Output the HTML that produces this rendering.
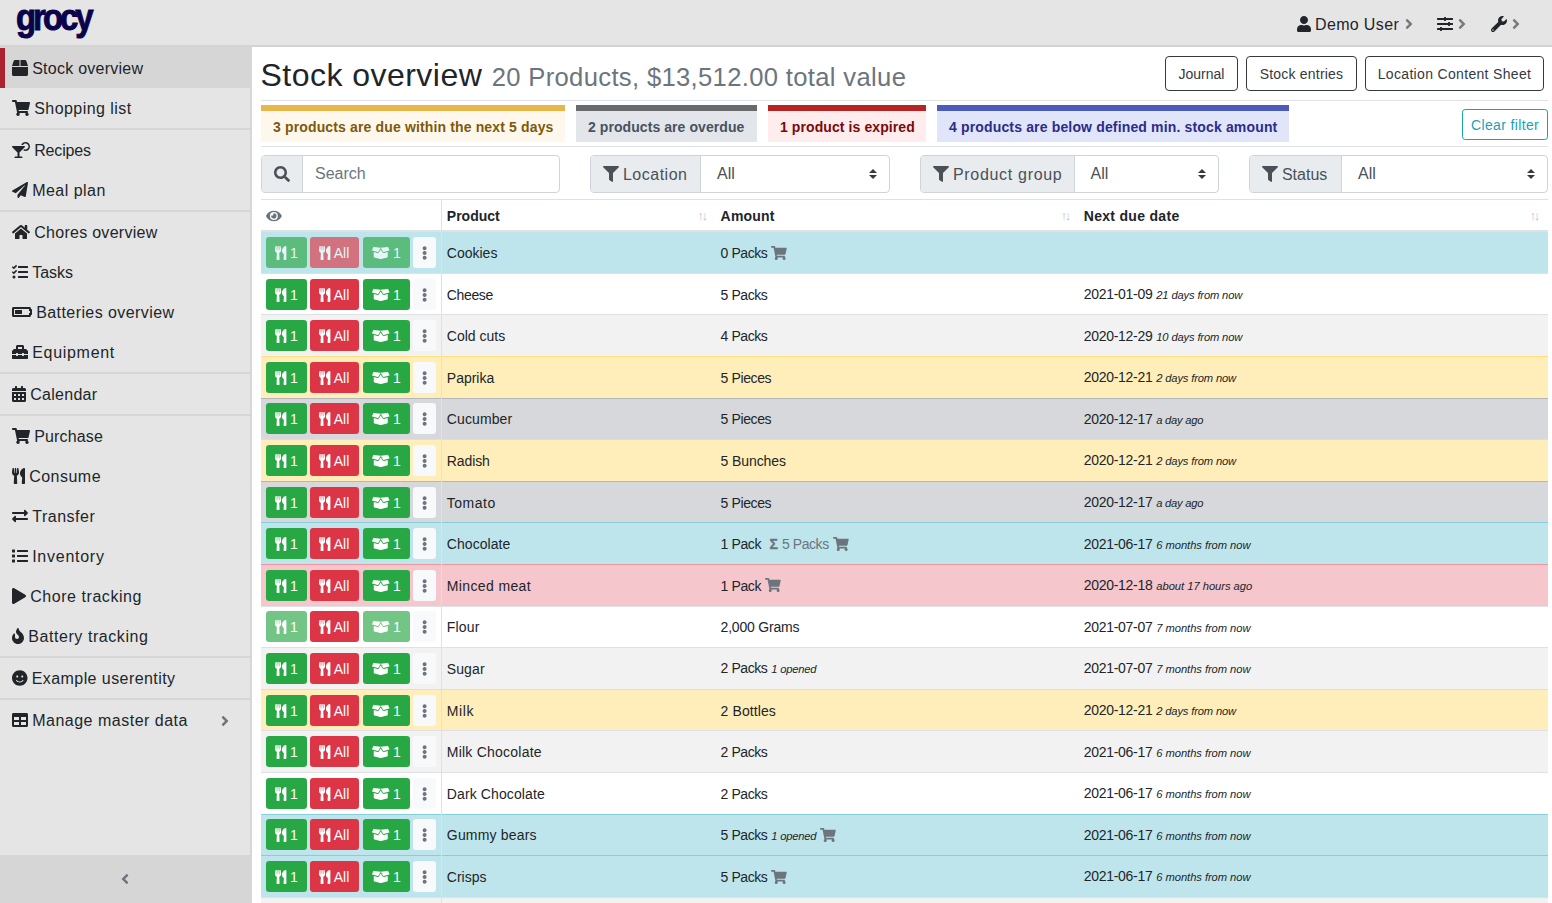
<!DOCTYPE html>
<html lang="en"><head><meta charset="utf-8"><title>Stock overview | grocy</title>
<style>
*{box-sizing:border-box}
html,body{margin:0;padding:0}
body{width:1552px;height:903px;overflow:hidden;background:#fff;color:#212529;
 font-family:"Liberation Sans",sans-serif;font-size:16px;line-height:1.5;position:relative}
svg.i{display:inline-block;fill:currentColor;vertical-align:-0.125em;overflow:visible}
#nav{position:absolute;left:0;top:0;width:1552px;height:47px;background:#e5e5e5;border-bottom:2px solid #d4d4d4}
#logo{position:absolute;left:15.5px;top:-7.5px;font-weight:bold;font-size:36.5px;line-height:50px;color:#0b024c;letter-spacing:-3.3px;transform-origin:0 0;transform:scaleX(.9);white-space:nowrap;-webkit-text-stroke:1px #0b024c}
#navr{position:absolute;top:13px;left:0;width:1552px;height:24px;font-size:16px;line-height:24px;white-space:nowrap}
#navr span{position:absolute;top:0}
#navr .ch{color:#7a7a7a}
#side{position:absolute;left:0;top:47px;width:252px;height:856px;background:#e5e5e5;border-right:2px solid #d6d6d6;border-top:1px solid #d6d6d6}
#side .it{height:40px;padding:9px 12px 7px;line-height:24px;font-size:16px;white-space:nowrap;position:relative}
#side .it.act{background:#d6d6d6;box-shadow:inset 5px 0 0 #ab2230}
#side .dv{height:2px;background:#d6d6d6}
#side .it svg.i{margin-right:4.2px}
#side .it .ar{position:absolute;left:221.3px;top:12.5px;color:#6c757d;margin:0}
#tog{position:absolute;left:0;top:807px;width:250px;height:49px;background:#d6d6d6;text-align:center;color:#6c757d;line-height:49px}
#main{position:absolute;left:261px;top:47px;width:1287px}
h2{position:absolute;left:-0.5px;top:8.7px;margin:0;font-size:32px;line-height:38.4px;font-weight:400;white-space:nowrap;letter-spacing:.47px}
h2 small{font-size:25.6px;color:#6c757d;font-weight:400;letter-spacing:.34px}
.tb{position:absolute;top:9px;height:35px;border:1px solid #343a40;border-radius:4px;color:#343a40;font-size:14px;line-height:21px;padding:7px 0 5px;text-align:center;white-space:nowrap}
.hr{position:absolute;left:0;width:1287px;height:1px;background:#dee2e6}
.msg{position:absolute;top:58px;height:37px;border-top:6px solid;padding:6px 12px 4px;font-size:14px;line-height:21px;font-weight:bold;white-space:nowrap}
.m1{border-color:#e8b749;background:#fef8ec;color:#7d5a0a}
.m2{border-color:#696a6c;background:#e2e5ea;color:#48525f}
.m3{border-color:#b82426;background:#ffecec;color:#7a0a0a}
.m4{border-color:#4b5db8;background:#e1e5f9;color:#2b2c8c}
#clr{position:absolute;left:1201px;top:62px;width:86px;height:31px;border:1px solid #17a2b8;border-radius:3.2px;color:#17a2b8;font-size:14px;line-height:21px;padding:5px 0 3px;text-align:center}
.ig{position:absolute;top:108px;height:38px;border:1px solid #ced4da;border-radius:4px;background:#fff;overflow:hidden;font-size:16px;line-height:24px;color:#495057;white-space:nowrap}
.ig .pre{position:absolute;left:0;top:0;bottom:0;background:#e9ecef;border-right:1px solid #ced4da;padding:7px 0 5px 11.5px;color:#495057}
.ig .val{position:absolute;top:6px}
.ig .car{position:absolute;top:13px;width:8px;height:10px}
.ig .ph{color:#6c757d}
table{position:absolute;left:0;top:151.6px;width:1287px;border-collapse:collapse;table-layout:fixed;font-size:14px;line-height:21px;color:#212529}
th,td{padding:4.8px;border-top:1px solid #dee2e6;vertical-align:middle;text-align:left;white-space:nowrap;overflow:hidden}
thead th{border-bottom:2px solid #dee2e6;font-weight:bold;position:relative;vertical-align:bottom}
.br{border-right:1px solid #dee2e6}
td.x{padding-top:5.8px;padding-bottom:3.8px}
thead th{padding-top:6.8px;padding-bottom:2.8px}
.sg{font-weight:bold;-webkit-text-stroke:.35px #6c757d}
tbody tr:nth-of-type(odd){background:rgba(0,0,0,.05)}
tr.info td{background:#bee5eb;border-color:#86cfda}
tr.warn td{background:#ffeeba;border-color:#ffdf7e}
tr.dang td{background:#f5c6cb;border-color:#ed969e}
tr.sec td{background:#d6d8db;border-color:#b3b7bb}
tr td.br{border-right-color:#dee2e6}
.b{display:inline-block;height:31px;border-radius:3.2px;color:#fff;font-size:14px;line-height:21px;padding:6px 0 4px;text-align:center;vertical-align:middle;white-space:nowrap}
.b svg.i{vertical-align:-2px}
.bg{background:#28a745;width:41px;margin-right:3px}
.bd{background:#dc3545;width:49px;margin-right:4px}
.bo{background:#28a745;width:47px;margin-right:3.3px}
.bk{background:#f8f9fa;width:22.7px;color:#6c757d}
.dis{opacity:.65}
.sort{position:absolute;bottom:4px;right:10.3px;opacity:.3;font-size:13px;line-height:21px;letter-spacing:-2.5px;font-weight:normal}
.mut{color:#6c757d}
.sm{font-size:11.2px;font-style:italic}
td .c{color:#6c757d}
</style></head>
<body>
<div id="nav"><div id="logo">grocy</div>
<div id="navr"><span style="left:1296.5px"><svg class="i " viewBox="0 0 448 512" width="14.0" height="16" style=""><path d="M224 256c70.7 0 128-57.3 128-128S294.7 0 224 0 96 57.3 96 128s57.3 128 128 128zm89.6 32h-16.7c-22.2 10.2-46.9 16-72.900 16s-50.600-5.800-72.900-16h-16.700C60.200 288 0 348.200 0 422.400V464c0 26.500 21.500 48 48 48h352c26.500 0 48-21.500 48-48v-41.600c0-74.200-60.200-134.400-134.400-134.400z"/></svg></span><span id="du" style="left:1315px;letter-spacing:.35px">Demo User</span><span class="ch" style="left:1405px"><svg class="i " viewBox="0 0 256 512" width="8.0" height="16" style=""><path d="M224.3 273l-136 136c-9.4 9.4-24.6 9.4-33.9 0l-22.6-22.6c-9.4-9.4-9.4-24.6 0-33.900l96.400-96.400-96.400-96.400c-9.400-9.400-9.400-24.600 0-33.900L54.300 103c9.400-9.400 24.600-9.400 33.900 0l136 136c9.500 9.400 9.500 24.600.1 34z"/></svg></span><span style="left:1437px"><svg class="i " viewBox="0 0 512 512" width="16.0" height="16" style=""><path d="M496 384H160v-16c0-8.800-7.200-16-16-16h-32c-8.800 0-16 7.200-16 16v16H16c-8.800 0-16 7.200-16 16v32c0 8.800 7.200 16 16 16h80v16c0 8.800 7.200 16 16 16h32c8.800 0 16-7.200 16-16v-16h336c8.800 0 16-7.200 16-16v-32c0-8.800-7.200-16-16-16zm0-160h-80v-16c0-8.800-7.200-16-16-16h-32c-8.800 0-16 7.200-16 16v16H16c-8.800 0-16 7.200-16 16v32c0 8.800 7.200 16 16 16h336v16c0 8.800 7.200 16 16 16h32c8.800 0 16-7.200 16-16v-16h80c8.800 0 16-7.200 16-16v-32c0-8.800-7.200-16-16-16zm0-160H288V48c0-8.800-7.200-16-16-16h-32c-8.800 0-16 7.200-16 16v16H16C7.200 64 0 71.200 0 80v32c0 8.800 7.200 16 16 16h208v16c0 8.800 7.200 16 16 16h32c8.800 0 16-7.200 16-16v-16h208c8.800 0 16-7.200 16-16V80c0-8.800-7.200-16-16-16z"/></svg></span><span class="ch" style="left:1458px"><svg class="i " viewBox="0 0 256 512" width="8.0" height="16" style=""><path d="M224.3 273l-136 136c-9.4 9.4-24.6 9.4-33.9 0l-22.6-22.6c-9.4-9.4-9.4-24.6 0-33.900l96.400-96.400-96.400-96.400c-9.400-9.400-9.400-24.600 0-33.900L54.300 103c9.400-9.400 24.600-9.400 33.900 0l136 136c9.500 9.400 9.500 24.600.1 34z"/></svg></span><span style="left:1490.5px"><svg class="i " viewBox="0 0 512 512" width="16.0" height="16" style=""><path d="M507.73 109.1c-2.24-9.03-13.54-12.09-20.12-5.51l-74.36 74.36-67.880-11.310-11.310-67.880 74.360-74.360c6.620-6.620 3.430-17.900-5.660-20.160-47.380-11.740-99.550.91-136.580 37.930-39.640 39.640-50.550 97.100-34.050 147.200L18.740 402.760c-24.990 24.990-24.990 65.510 0 90.500 24.990 24.990 65.510 24.990 90.500 0l213.210-213.210c50.120 16.710 107.470 5.680 147.370-34.220 37.070-37.070 49.700-89.320 37.910-136.730zM64 472c-13.250 0-24-10.750-24-24 0-13.260 10.750-24 24-24s24 10.740 24 24c0 13.250-10.750 24-24 24z"/></svg></span><span class="ch" style="left:1512px"><svg class="i " viewBox="0 0 256 512" width="8.0" height="16" style=""><path d="M224.3 273l-136 136c-9.4 9.4-24.6 9.4-33.9 0l-22.6-22.6c-9.4-9.4-9.4-24.6 0-33.900l96.400-96.400-96.400-96.400c-9.400-9.400-9.400-24.600 0-33.900L54.300 103c9.400-9.400 24.600-9.400 33.900 0l136 136c9.500 9.400 9.500 24.600.1 34z"/></svg></span></div></div>
<div id="side">
<div class="it act"><svg class="i " viewBox="0 0 512 512" width="16.0" height="16" style=""><path d="M509.5 184.6L458.9 32.8C452.4 13.2 434.1 0 413.4 0H272v192h238.700c-.4-2.5-.4-5-1.200-7.400zM240 0H98.600c-20.700 0-39 13.200-45.500 32.800L2.500 184.600c-.8 2.400-.8 4.900-1.200 7.400H240V0zM0 224v240c0 26.500 21.500 48 48 48h416c26.500 0 48-21.500 48-48V224H0z"/></svg><span class="t" style="letter-spacing:0.25px">Stock overview</span></div>
<div class="it"><svg class="i " viewBox="0 0 576 512" width="18.0" height="16" style=""><path d="M528.12 301.319l47.273-208C578.806 78.301 567.391 64 551.99 64H159.208l-9.166-44.81C147.758 8.021 137.93 0 126.529 0H24C10.745 0 0 10.745 0 24v16c0 13.255 10.745 24 24 24h69.883l70.248 343.435C147.325 417.1 136 435.222 136 456c0 30.928 25.072 56 56 56s56-25.072 56-56c0-15.674-6.447-29.835-16.824-40h209.647C430.447 426.165 424 440.326 424 456c0 30.928 25.072 56 56 56s56-25.072 56-56c0-22.172-12.888-41.332-31.579-50.405l5.517-24.276c3.413-15.018-8.002-29.319-23.403-29.319H218.117l-6.545-32h293.145c11.206 0 20.92-7.754 23.403-18.681z"/></svg><span class="t" style="letter-spacing:0.45px">Shopping list</span></div>
<div class="dv"></div>
<div class="it"><svg class="i " viewBox="0 0 576 512" width="18.0" height="16" style=""><path d="M296 464h-56V338.78l168.74-168.73c15.52-15.52 4.53-42.05-17.42-42.050H24.680c-21.950 0-32.940 26.530-17.420 42.050L176 338.780V464h-56c-22.090 0-40 17.910-40 40 0 4.420 3.580 8 8 8h240c4.420 0 8-3.580 8-8 0-22.090-17.910-40-40-40zM432 0c-62.610 0-115.350 40.200-135.180 96h52.540c16.650-28.550 47.270-48 82.640-48 52.930 0 96 43.060 96 96s-43.070 96-96 96c-14.040 0-27.290-3.200-39.320-8.640l-35.260 35.260C379.230 279.920 404.590 288 432 288c79.530 0 144-64.470 144-144S511.530 0 432 0z"/></svg><span class="t" style="letter-spacing:-0.17px">Recipes</span></div>
<div class="it"><svg class="i " viewBox="0 0 512 512" width="16.0" height="16" style=""><path d="M476 3.2L12.5 270.6c-18.1 10.4-15.8 35.6 2.2 43.2L121 358.4l287.300-253.200c5.500-4.900 13.300 2.600 8.600 8.300L176 407v80.500c0 23.600 28.500 32.900 42.500 15.800L282 426l124.600 52.200c14.200 6 30.400-2.900 33-18.200l72-432C515 7.800 493.300-6.800 476 3.200z"/></svg><span class="t" style="letter-spacing:0.47px">Meal plan</span></div>
<div class="dv"></div>
<div class="it"><svg class="i " viewBox="0 0 576 512" width="18.0" height="16" style=""><path d="M280.37 148.26L96 300.11V464a16 16 0 0 0 16 16l112.060-.29a16 16 0 0 0 15.920-16V368a16 16 0 0 1 16-16h64a16 16 0 0 1 16 16v95.640a16 16 0 0 0 16 16.050L464 480a16 16 0 0 0 16-16V300L295.670 148.260a12.190 12.190 0 0 0-15.300 0zM571.600 251.470L488 182.560V44.050a12 12 0 0 0-12-12h-56a12 12 0 0 0-12 12v72.610L318.470 43a48 48 0 0 0-61 0L4.340 251.470a12 12 0 0 0-1.600 16.900l25.500 31A12 12 0 0 0 45.150 301l235.220-193.740a12.190 12.190 0 0 1 15.300 0L530.900 301a12 12 0 0 0 16.900-1.600l25.500-31a12 12 0 0 0-1.700-16.930z"/></svg><span class="t" style="letter-spacing:0.28px">Chores overview</span></div>
<div class="it"><svg class="i " viewBox="0 0 512 512" width="16.0" height="16" style=""><path d="M139.61 35.5a12 12 0 0 0-17 0L58.93 98.81l-22.700-22.120a12 12 0 0 0-17 0L3.530 92.410a12 12 0 0 0 0 17l47.590 47.400a12.780 12.780 0 0 0 17.610 0l15.590-15.620L156.520 69a12.090 12.090 0 0 0 .09-17zm0 159.190a12 12 0 0 0-17 0l-63.680 63.720-22.700-22.100a12 12 0 0 0-17 0L3.530 252a12 12 0 0 0 0 17L51 316.500a12.770 12.770 0 0 0 17.600 0l15.700-15.690 72.200-72.220a12 12 0 0 0 .09-16.900zM64 368c-26.490 0-48.590 21.500-48.590 48S37.530 464 64 464a48 48 0 0 0 0-96zm432 16H208a16 16 0 0 0-16 16v32a16 16 0 0 0 16 16h288a16 16 0 0 0 16-16v-32a16 16 0 0 0-16-16zm0-320H208a16 16 0 0 0-16 16v32a16 16 0 0 0 16 16h288a16 16 0 0 0 16-16V80a16 16 0 0 0-16-16zm0 160H208a16 16 0 0 0-16 16v32a16 16 0 0 0 16 16h288a16 16 0 0 0 16-16v-32a16 16 0 0 0-16-16z"/></svg><span class="t" style="letter-spacing:-0.02px">Tasks</span></div>
<div class="it"><svg class="i " viewBox="0 0 640 512" width="20.0" height="16" style=""><path d="M544 160v64h32v64h-32v64H64V160h480m16-64H48c-26.510 0-48 21.490-48 48v224c0 26.510 21.490 48 48 48h512c26.510 0 48-21.490 48-48v-16h8c13.255 0 24-10.745 24-24V184c0-13.255-10.745-24-24-24h-8v-16c0-26.510-21.490-48-48-48zm-240 96H96v128h224V192z"/></svg><span class="t" style="letter-spacing:0.42px">Batteries overview</span></div>
<div class="it"><svg class="i " viewBox="0 0 512 512" width="16.0" height="16" style=""><path d="M502.63 214.63l-45.25-45.25c-6-6-14.14-9.37-22.630-9.370H384V80c0-26.510-21.490-48-48-48H176c-26.510 0-48 21.490-48 48v80H77.250c-8.490 0-16.620 3.370-22.630 9.370L9.370 214.630c-6 6-9.370 14.140-9.370 22.630V320h128v-16c0-8.840 7.160-16 16-16h32c8.840 0 16 7.160 16 16v16h128v-16c0-8.840 7.160-16 16-16h32c8.840 0 16 7.160 16 16v16h128v-82.750c0-8.480-3.370-16.620-9.370-22.620zM320 160H192V96h128v64zm64 208c0 8.840-7.160 16-16 16h-32c-8.840 0-16-7.160-16-16v-16H192v16c0 8.840-7.160 16-16 16h-32c-8.840 0-16-7.160-16-16v-16H0v96c0 17.670 14.330 32 32 32h448c17.670 0 32-14.330 32-32v-96H384v16z"/></svg><span class="t" style="letter-spacing:0.7px">Equipment</span></div>
<div class="dv"></div>
<div class="it"><svg class="i " viewBox="0 0 448 512" width="14.0" height="16" style=""><path d="M0 464c0 26.5 21.5 48 48 48h352c26.500 0 48-21.500 48-48V192H0v272zm320-196c0-6.600 5.400-12 12-12h40c6.600 0 12 5.400 12 12v40c0 6.600-5.400 12-12 12h-40c-6.600 0-12-5.400-12-12v-40zm0 128c0-6.600 5.400-12 12-12h40c6.600 0 12 5.400 12 12v40c0 6.600-5.400 12-12 12h-40c-6.600 0-12-5.400-12-12v-40zM192 268c0-6.600 5.400-12 12-12h40c6.600 0 12 5.400 12 12v40c0 6.600-5.400 12-12 12h-40c-6.600 0-12-5.400-12-12v-40zm0 128c0-6.600 5.400-12 12-12h40c6.600 0 12 5.400 12 12v40c0 6.600-5.400 12-12 12h-40c-6.600 0-12-5.400-12-12v-40zM64 268c0-6.600 5.400-12 12-12h40c6.600 0 12 5.400 12 12v40c0 6.600-5.400 12-12 12H76c-6.600 0-12-5.400-12-12v-40zm0 128c0-6.600 5.400-12 12-12h40c6.600 0 12 5.400 12 12v40c0 6.600-5.400 12-12 12H76c-6.600 0-12-5.400-12-12v-40zM400 64h-48V16c0-8.800-7.200-16-16-16h-32c-8.800 0-16 7.200-16 16v48H160V16c0-8.800-7.200-16-16-16h-32c-8.800 0-16 7.200-16 16v48H48C21.500 64 0 85.500 0 112v48h448v-48c0-26.500-21.500-48-48-48z"/></svg><span class="t" style="letter-spacing:0.28px">Calendar</span></div>
<div class="dv"></div>
<div class="it"><svg class="i " viewBox="0 0 576 512" width="18.0" height="16" style=""><path d="M528.12 301.319l47.273-208C578.806 78.301 567.391 64 551.99 64H159.208l-9.166-44.81C147.758 8.021 137.93 0 126.529 0H24C10.745 0 0 10.745 0 24v16c0 13.255 10.745 24 24 24h69.883l70.248 343.435C147.325 417.1 136 435.222 136 456c0 30.928 25.072 56 56 56s56-25.072 56-56c0-15.674-6.447-29.835-16.824-40h209.647C430.447 426.165 424 440.326 424 456c0 30.928 25.072 56 56 56s56-25.072 56-56c0-22.172-12.888-41.332-31.579-50.405l5.517-24.276c3.413-15.018-8.002-29.319-23.403-29.319H218.117l-6.545-32h293.145c11.206 0 20.92-7.754 23.403-18.681z"/></svg><span class="t" style="letter-spacing:0.15px">Purchase</span></div>
<div class="it"><svg class="i " viewBox="0 0 416 512" width="13.0" height="16" style=""><path d="M207.9 15.2c.8 4.7 16.1 94.5 16.1 128.8 0 52.300-27.800 89.600-68.900 104.600L168 486.700c.7 13.700-10.200 25.300-24 25.300H80c-13.700 0-24.700-11.500-24-25.300l12.900-238.100C27.700 233.600 0 196.200 0 144 0 109.600 15.300 19.900 16.100 15.200 19.300-5.100 61.400-5.400 64 16.300v141.200c1.300 3.400 15.100 3.200 16 0 1.400-25.300 7.900-139.200 8-141.800 3.300-20.800 44.700-20.800 47.900 0 .2 2.700 6.600 116.500 8 141.800.9 3.200 14.800 3.400 16 0V16.300c2.600-21.600 44.800-21.400 48-1.100zm119.200 285.700l-15 185.100c-1.200 14 9.900 26 23.900 26h56c13.300 0 24-10.700 24-24V24c0-13.200-10.700-24-24-24-82.500 0-221.400 178.500-64.900 300.900z"/></svg><span class="t" style="letter-spacing:0.48px">Consume</span></div>
<div class="it"><svg class="i " viewBox="0 0 512 512" width="16.0" height="16" style=""><path d="M0 168v-16c0-13.255 10.745-24 24-24h360V80c0-21.367 25.899-32.042 40.971-16.971l80 80c9.372 9.373 9.372 24.569 0 33.941l-80 80C409.956 271.982 384 261.456 384 240v-48H24c-13.255 0-24-10.745-24-24zm488 152H128v-48c0-21.314-25.862-32.080-40.971-16.971l-80 80c-9.372 9.373-9.372 24.569 0 33.941l80 80C102.057 463.997 128 453.437 128 432v-48h360c13.255 0 24-10.745 24-24v-16c0-13.255-10.745-24-24-24z"/></svg><span class="t" style="letter-spacing:0.52px">Transfer</span></div>
<div class="it"><svg class="i " viewBox="0 0 512 512" width="16.0" height="16" style=""><path d="M80 368H16a16 16 0 0 0-16 16v64a16 16 0 0 0 16 16h64a16 16 0 0 0 16-16v-64a16 16 0 0 0-16-16zm0-320H16A16 16 0 0 0 0 64v64a16 16 0 0 0 16 16h64a16 16 0 0 0 16-16V64a16 16 0 0 0-16-16zm0 160H16a16 16 0 0 0-16 16v64a16 16 0 0 0 16 16h64a16 16 0 0 0 16-16v-64a16 16 0 0 0-16-16zm416 176H176a16 16 0 0 0-16 16v32a16 16 0 0 0 16 16h320a16 16 0 0 0 16-16v-32a16 16 0 0 0-16-16zm0-320H176a16 16 0 0 0-16 16v32a16 16 0 0 0 16 16h320a16 16 0 0 0 16-16V80a16 16 0 0 0-16-16zm0 160H176a16 16 0 0 0-16 16v32a16 16 0 0 0 16 16h320a16 16 0 0 0 16-16v-32a16 16 0 0 0-16-16z"/></svg><span class="t" style="letter-spacing:0.74px">Inventory</span></div>
<div class="it"><svg class="i " viewBox="0 0 448 512" width="14.0" height="16" style=""><path d="M424.4 214.7L72.4 6.6C43.8-10.3 0 6.1 0 47.9V464c0 37.5 40.7 60.1 72.4 41.3l352-208c31.4-18.5 31.5-64.1 0-82.600z"/></svg><span class="t" style="letter-spacing:0.55px">Chore tracking</span></div>
<div class="it"><svg class="i " viewBox="0 0 384 512" width="12.0" height="16" style=""><path d="M216 23.86c0-23.8-30.65-32.77-44.15-13.04C48 191.85 224 200 224 288c0 35.630-29.110 64.460-64.850 63.990-35.170-.45-63.150-29.770-63.150-64.940v-85.510c0-21.700-26.470-32.230-41.430-16.500C27.800 213.160 0 261.330 0 320c0 105.870 86.130 192 192 192s192-86.130 192-192c0-170.290-168-193-168-296.140z"/></svg><span class="t" style="letter-spacing:0.57px">Battery tracking</span></div>
<div class="dv"></div>
<div class="it"><svg class="i " viewBox="0 0 496 512" width="15.5" height="16" style=""><path d="M248 8C111 8 0 119 0 256s111 248 248 248 248-111 248-248S385 8 248 8zm80 168c17.700 0 32 14.300 32 32s-14.300 32-32 32-32-14.300-32-32 14.300-32 32-32zm-160 0c17.700 0 32 14.300 32 32s-14.300 32-32 32-32-14.300-32-32 14.300-32 32-32zm194.800 170.200C334.300 380.400 292.500 400 248 400s-86.300-19.600-114.800-53.800c-13.600-16.300 11-36.700 24.600-20.500 22.400 26.900 55.200 42.200 90.200 42.200s67.800-15.400 90.200-42.200c13.400-16.200 38.100 4.200 24.600 20.500z"/></svg><span class="t" style="letter-spacing:0.43px">Example userentity</span></div>
<div class="dv"></div>
<div class="it"><svg class="i " viewBox="0 0 512 512" width="16.0" height="16" style=""><path d="M464 32H48C21.49 32 0 53.49 0 80v352c0 26.510 21.490 48 48 48h416c26.510 0 48-21.490 48-48V80c0-26.510-21.490-48-48-48zM224 416H64v-96h160v96zm0-160H64v-96h160v96zm224 160H288v-96h160v96zm0-160H288v-96h160v96z"/></svg><span class="t" style="letter-spacing:0.5px">Manage master data</span><svg class="i ar" viewBox="0 0 256 512" width="8.0" height="16" style=""><path d="M224.3 273l-136 136c-9.4 9.4-24.6 9.4-33.9 0l-22.6-22.6c-9.4-9.4-9.4-24.6 0-33.900l96.400-96.400-96.400-96.400c-9.400-9.400-9.400-24.600 0-33.900L54.300 103c9.400-9.400 24.600-9.400 33.900 0l136 136c9.500 9.400 9.500 24.600.1 34z"/></svg></div>
<div id="tog"><svg class="i " viewBox="0 0 256 512" width="8.0" height="16" style=""><path d="M31.7 239l136-136c9.4-9.4 24.6-9.4 33.900 0l22.600 22.600c9.400 9.400 9.400 24.600 0 33.900L127.900 256l96.400 96.400c9.400 9.400 9.400 24.600 0 33.900L201.700 409c-9.400 9.400-24.600 9.400-33.900 0l-136-136c-9.500-9.400-9.500-24.600-.1-34z"/></svg></div>
</div>
<div id="main">
<h2><span id="ttl">Stock overview</span> <small id="sub">20 Products, $13,512.00 total value</small></h2>
<div class="tb" style="left:904px;width:73px">Journal</div><div class="tb" style="left:985px;width:111px"><span style="letter-spacing:0.2px;">Stock entries</span></div><div class="tb" style="left:1104px;width:179px"><span style="letter-spacing:0.33px;">Location Content Sheet</span></div>
<div class="hr" style="top:53px"></div>
<div class="msg m1" style="left:0;width:304px"><span style="letter-spacing:0.144px;">3 products are due within the next 5 days</span></div><div class="msg m2" style="left:315px;width:181px"><span style="letter-spacing:0.07px;">2 products are overdue</span></div><div class="msg m3" style="left:507px;width:158px"><span style="letter-spacing:0.09px;">1 product is expired</span></div><div class="msg m4" style="left:676px;width:352px"><span style="letter-spacing:0.155px;">4 products are below defined min. stock amount</span></div><div id="clr"><span style="letter-spacing:0.36px;">Clear filter</span></div>
<div class="hr" style="top:99px"></div>
<div class="ig" style="left:0;width:299px"><div class="pre" style="width:40.5px"><svg class="i " viewBox="0 0 512 512" width="16.0" height="16" style=""><path d="M505 442.7L405.3 343c-4.5-4.5-10.6-7-17-7H372c27.600-35.300 44-79.700 44-128C416 93.100 322.900 0 208 0S0 93.100 0 208s93.100 208 208 208c48.300 0 92.700-16.400 128-44v16.300c0 6.400 2.500 12.500 7 17l99.700 99.700c9.400 9.400 24.600 9.400 33.900 0l28.300-28.300c9.400-9.400 9.400-24.600.1-34zM208 336c-70.700 0-128-57.200-128-128 0-70.700 57.200-128 128-128 70.700 0 128 57.200 128 128 0 70.700-57.200 128-128 128z"/></svg></div><span class="val ph" style="left:53px">Search</span></div>
<div class="ig" style="left:329px;width:300px"><div class="pre" style="width:110px"><svg class="i " viewBox="0 0 512 512" width="16.0" height="16" style=""><path d="M487.976 0H24.028C2.71 0-8.047 25.866 7.058 40.971L192 225.941V432c0 7.831 3.821 15.170 10.237 19.662l80 55.980C298.020 518.690 320 507.493 320 487.980V225.941l184.947-184.970C520.021 25.896 509.338 0 487.976 0z"/></svg>&nbsp;<span style="letter-spacing:0.5px;">Location</span></div><span class="val" style="left:126px">All</span><svg class="car" viewBox="0 0 4 5" style="left:278px"><path fill="#343a40" d="M2 0L0 2h4zm0 5L0 3h4z"/></svg></div>
<div class="ig" style="left:659px;width:299px"><div class="pre" style="width:154px"><svg class="i " viewBox="0 0 512 512" width="16.0" height="16" style=""><path d="M487.976 0H24.028C2.71 0-8.047 25.866 7.058 40.971L192 225.941V432c0 7.831 3.821 15.170 10.237 19.662l80 55.980C298.020 518.690 320 507.493 320 487.980V225.941l184.947-184.970C520.021 25.896 509.338 0 487.976 0z"/></svg>&nbsp;<span style="letter-spacing:0.69px;">Product group</span></div><span class="val" style="left:169.5px">All</span><svg class="car" viewBox="0 0 4 5" style="left:277px"><path fill="#343a40" d="M2 0L0 2h4zm0 5L0 3h4z"/></svg></div>
<div class="ig" style="left:988px;width:299px"><div class="pre" style="width:92px"><svg class="i " viewBox="0 0 512 512" width="16.0" height="16" style=""><path d="M487.976 0H24.028C2.71 0-8.047 25.866 7.058 40.971L192 225.941V432c0 7.831 3.821 15.170 10.237 19.662l80 55.980C298.020 518.690 320 507.493 320 487.980V225.941l184.947-184.970C520.021 25.896 509.338 0 487.976 0z"/></svg>&nbsp;Status</div><span class="val" style="left:108px">All</span><svg class="car" viewBox="0 0 4 5" style="left:277px"><path fill="#343a40" d="M2 0L0 2h4zm0 5L0 3h4z"/></svg></div>
<table><colgroup><col style="width:180.5px"><col style="width:274.3px"><col style="width:363.2px"><col></colgroup>
<thead><tr><th class="br"><svg class="i " viewBox="0 0 576 512" width="15.75" height="14" style="margin-left:0.5px;color:#6c757d"><path d="M572.52 241.4C518.29 135.59 410.93 64 288 64S57.68 135.64 3.480 241.410a32.350 32.350 0 0 0 0 29.190C57.710 376.410 165.070 448 288 448s230.320-71.640 284.520-177.410a32.350 32.350 0 0 0 0-29.190zM288 400a144 144 0 1 1 144-144 143.930 143.930 0 0 1-144 144zm0-240a95.310 95.310 0 0 0-25.310 3.790 47.850 47.850 0 0 1-66.900 66.900A95.780 95.780 0 1 0 288 160z"/></svg></th><th>Product<span class="sort">↑↓</span></th><th><span style="letter-spacing:0.2px;">Amount</span><span class="sort">↑↓</span></th><th><span style="letter-spacing:0.3px;">Next due date</span><span class="sort">↑↓</span></th></tr></thead>
<tbody>
<tr class="info"><td class="br"><span class="b bg dis"><svg class="i " viewBox="0 0 416 512" width="11.375" height="14" style=""><path d="M207.9 15.2c.8 4.7 16.1 94.5 16.1 128.8 0 52.300-27.800 89.600-68.900 104.600L168 486.700c.7 13.700-10.200 25.300-24 25.300H80c-13.700 0-24.700-11.500-24-25.300l12.900-238.100C27.700 233.600 0 196.200 0 144 0 109.600 15.300 19.900 16.100 15.200 19.300-5.100 61.400-5.400 64 16.300v141.200c1.300 3.400 15.100 3.200 16 0 1.400-25.300 7.900-139.200 8-141.800 3.300-20.800 44.700-20.800 47.900 0 .2 2.700 6.600 116.500 8 141.800.9 3.200 14.800 3.400 16 0V16.300c2.600-21.600 44.800-21.400 48-1.100zm119.200 285.700l-15 185.100c-1.200 14 9.900 26 23.900 26h56c13.300 0 24-10.700 24-24V24c0-13.200-10.700-24-24-24-82.500 0-221.400 178.500-64.900 300.900z"/></svg> 1</span><span class="b bd dis"><svg class="i " viewBox="0 0 416 512" width="11.375" height="14" style=""><path d="M207.9 15.2c.8 4.7 16.1 94.5 16.1 128.8 0 52.300-27.800 89.600-68.900 104.600L168 486.700c.7 13.700-10.200 25.300-24 25.300H80c-13.700 0-24.700-11.500-24-25.300l12.900-238.100C27.700 233.600 0 196.200 0 144 0 109.600 15.300 19.900 16.100 15.200 19.300-5.100 61.400-5.400 64 16.300v141.200c1.300 3.400 15.100 3.200 16 0 1.400-25.300 7.900-139.200 8-141.800 3.300-20.800 44.700-20.800 47.900 0 .2 2.700 6.600 116.500 8 141.800.9 3.200 14.800 3.400 16 0V16.300c2.600-21.600 44.800-21.400 48-1.100zm119.200 285.700l-15 185.100c-1.200 14 9.900 26 23.900 26h56c13.300 0 24-10.700 24-24V24c0-13.200-10.700-24-24-24-82.500 0-221.400 178.500-64.900 300.900z"/></svg> All</span><span class="b bo dis"><svg class="i " viewBox="0 0 640 512" width="17.5" height="14" style=""><path d="M425.7 256c-16.9 0-32.8-9-41.4-23.4L320 126l-64.200 106.600c-8.700 14.500-24.600 23.500-41.500 23.500-4.500 0-9-.6-13.300-1.900L64 215v178c0 14.700 10 27.500 24.200 31l216.200 54.100c10.200 2.500 20.900 2.500 31 0L551.800 424c14.200-3.600 24.200-16.400 24.200-31V215l-137 39.100c-4.300 1.300-8.800 1.900-13.300 1.900zm212.600-112.200L586.800 41c-3.100-6.200-9.800-9.800-16.700-8.900L320 64l91.700 152.100c3.800 6.300 11.400 9.300 18.500 7.300l197.900-56.500c9.900-2.900 14.700-13.900 10.200-23.100zM53.200 41L1.700 143.800c-4.600 9.200.3 20.200 10.100 23l197.900 56.500c7.100 2 14.700-1 18.500-7.300L320 64 69.800 32.100c-6.900-.8-13.500 2.700-16.600 8.900z"/></svg> 1</span><span class="b bk"><svg class="i " viewBox="0 0 192 512" width="5.25" height="14" style=""><path d="M96 184c39.8 0 72 32.2 72 72s-32.2 72-72 72-72-32.2-72-72 32.2-72 72-72zM24 80c0 39.800 32.200 72 72 72s72-32.200 72-72S135.800 8 96 8 24 40.200 24 80zm0 352c0 39.800 32.200 72 72 72s72-32.200 72-72-32.200-72-72-72-72 32.200-72 72z"/></svg></span></td><td class="x">Cookies</td><td class="x"><span style="letter-spacing:-0.43px;">0 Packs</span> <svg class="i c" viewBox="0 0 576 512" width="15.75" height="14" style=""><path d="M528.12 301.319l47.273-208C578.806 78.301 567.391 64 551.99 64H159.208l-9.166-44.81C147.758 8.021 137.93 0 126.529 0H24C10.745 0 0 10.745 0 24v16c0 13.255 10.745 24 24 24h69.883l70.248 343.435C147.325 417.1 136 435.222 136 456c0 30.928 25.072 56 56 56s56-25.072 56-56c0-15.674-6.447-29.835-16.824-40h209.647C430.447 426.165 424 440.326 424 456c0 30.928 25.072 56 56 56s56-25.072 56-56c0-22.172-12.888-41.332-31.579-50.405l5.517-24.276c3.413-15.018-8.002-29.319-23.403-29.319H218.117l-6.545-32h293.145c11.206 0 20.92-7.754 23.403-18.681z"/></svg></td><td class="x"></td></tr>
<tr class=""><td class="br"><span class="b bg"><svg class="i " viewBox="0 0 416 512" width="11.375" height="14" style=""><path d="M207.9 15.2c.8 4.7 16.1 94.5 16.1 128.8 0 52.300-27.800 89.600-68.900 104.600L168 486.700c.7 13.700-10.200 25.300-24 25.300H80c-13.700 0-24.700-11.500-24-25.300l12.900-238.100C27.700 233.600 0 196.200 0 144 0 109.600 15.300 19.900 16.100 15.200 19.300-5.100 61.400-5.400 64 16.300v141.200c1.300 3.400 15.100 3.200 16 0 1.400-25.300 7.900-139.200 8-141.800 3.300-20.800 44.700-20.800 47.900 0 .2 2.700 6.600 116.500 8 141.800.9 3.200 14.800 3.400 16 0V16.300c2.600-21.600 44.800-21.400 48-1.100zm119.200 285.700l-15 185.100c-1.200 14 9.900 26 23.900 26h56c13.300 0 24-10.700 24-24V24c0-13.200-10.700-24-24-24-82.500 0-221.400 178.500-64.900 300.900z"/></svg> 1</span><span class="b bd"><svg class="i " viewBox="0 0 416 512" width="11.375" height="14" style=""><path d="M207.9 15.2c.8 4.7 16.1 94.5 16.1 128.8 0 52.300-27.800 89.600-68.900 104.600L168 486.700c.7 13.700-10.200 25.300-24 25.300H80c-13.700 0-24.700-11.500-24-25.300l12.900-238.100C27.700 233.600 0 196.200 0 144 0 109.600 15.300 19.900 16.100 15.200 19.300-5.100 61.400-5.400 64 16.300v141.200c1.300 3.400 15.100 3.200 16 0 1.400-25.300 7.900-139.200 8-141.800 3.300-20.800 44.700-20.800 47.900 0 .2 2.700 6.600 116.500 8 141.800.9 3.200 14.800 3.400 16 0V16.300c2.600-21.600 44.800-21.400 48-1.100zm119.200 285.700l-15 185.100c-1.200 14 9.900 26 23.900 26h56c13.300 0 24-10.700 24-24V24c0-13.200-10.700-24-24-24-82.500 0-221.400 178.500-64.900 300.900z"/></svg> All</span><span class="b bo"><svg class="i " viewBox="0 0 640 512" width="17.5" height="14" style=""><path d="M425.7 256c-16.9 0-32.8-9-41.4-23.4L320 126l-64.200 106.600c-8.700 14.500-24.600 23.500-41.500 23.500-4.500 0-9-.6-13.300-1.900L64 215v178c0 14.700 10 27.500 24.200 31l216.200 54.100c10.200 2.500 20.900 2.500 31 0L551.800 424c14.200-3.600 24.200-16.400 24.200-31V215l-137 39.100c-4.300 1.300-8.800 1.900-13.300 1.900zm212.600-112.200L586.800 41c-3.100-6.200-9.800-9.800-16.700-8.900L320 64l91.700 152.100c3.800 6.300 11.400 9.300 18.500 7.300l197.900-56.500c9.900-2.900 14.700-13.900 10.200-23.100zM53.200 41L1.700 143.800c-4.600 9.200.3 20.200 10.100 23l197.900 56.500c7.100 2 14.700-1 18.500-7.300L320 64 69.800 32.100c-6.900-.8-13.500 2.700-16.600 8.900z"/></svg> 1</span><span class="b bk"><svg class="i " viewBox="0 0 192 512" width="5.25" height="14" style=""><path d="M96 184c39.8 0 72 32.2 72 72s-32.2 72-72 72-72-32.2-72-72 32.2-72 72-72zM24 80c0 39.800 32.200 72 72 72s72-32.200 72-72S135.800 8 96 8 24 40.200 24 80zm0 352c0 39.800 32.200 72 72 72s72-32.200 72-72-32.200-72-72-72-72 32.200-72 72z"/></svg></span></td><td class="x"><span style="letter-spacing:-0.35px;">Cheese</span></td><td class="x"><span style="letter-spacing:-0.43px;">5 Packs</span></td><td class="x"><span style="letter-spacing:-0.3px;">2021-01-09</span> <span class="sm" style="letter-spacing:-0.15px">21 days from now</span></td></tr>
<tr class=""><td class="br"><span class="b bg"><svg class="i " viewBox="0 0 416 512" width="11.375" height="14" style=""><path d="M207.9 15.2c.8 4.7 16.1 94.5 16.1 128.8 0 52.300-27.800 89.600-68.900 104.600L168 486.700c.7 13.700-10.200 25.300-24 25.300H80c-13.700 0-24.700-11.500-24-25.300l12.900-238.100C27.700 233.600 0 196.200 0 144 0 109.600 15.300 19.900 16.100 15.200 19.300-5.100 61.400-5.400 64 16.300v141.200c1.300 3.400 15.100 3.200 16 0 1.400-25.300 7.900-139.200 8-141.800 3.300-20.800 44.700-20.800 47.900 0 .2 2.700 6.600 116.500 8 141.800.9 3.200 14.800 3.400 16 0V16.300c2.600-21.600 44.800-21.400 48-1.100zm119.200 285.700l-15 185.100c-1.200 14 9.900 26 23.900 26h56c13.300 0 24-10.700 24-24V24c0-13.200-10.700-24-24-24-82.500 0-221.400 178.500-64.900 300.900z"/></svg> 1</span><span class="b bd"><svg class="i " viewBox="0 0 416 512" width="11.375" height="14" style=""><path d="M207.9 15.2c.8 4.7 16.1 94.5 16.1 128.8 0 52.300-27.800 89.600-68.900 104.600L168 486.700c.7 13.700-10.200 25.300-24 25.300H80c-13.700 0-24.700-11.500-24-25.300l12.900-238.100C27.700 233.600 0 196.200 0 144 0 109.600 15.300 19.900 16.100 15.200 19.300-5.100 61.400-5.400 64 16.300v141.200c1.300 3.400 15.100 3.200 16 0 1.400-25.300 7.900-139.200 8-141.800 3.300-20.800 44.700-20.800 47.900 0 .2 2.700 6.600 116.500 8 141.800.9 3.200 14.800 3.400 16 0V16.300c2.600-21.600 44.800-21.400 48-1.100zm119.200 285.700l-15 185.100c-1.200 14 9.900 26 23.900 26h56c13.300 0 24-10.700 24-24V24c0-13.200-10.700-24-24-24-82.500 0-221.400 178.500-64.900 300.900z"/></svg> All</span><span class="b bo"><svg class="i " viewBox="0 0 640 512" width="17.5" height="14" style=""><path d="M425.7 256c-16.9 0-32.8-9-41.4-23.4L320 126l-64.200 106.600c-8.700 14.500-24.600 23.500-41.500 23.500-4.500 0-9-.6-13.300-1.900L64 215v178c0 14.700 10 27.500 24.200 31l216.200 54.100c10.200 2.500 20.900 2.500 31 0L551.800 424c14.200-3.600 24.200-16.400 24.200-31V215l-137 39.100c-4.300 1.300-8.800 1.900-13.300 1.900zm212.600-112.200L586.800 41c-3.100-6.200-9.800-9.800-16.700-8.900L320 64l91.700 152.100c3.800 6.300 11.400 9.300 18.500 7.300l197.900-56.500c9.900-2.900 14.700-13.900 10.200-23.100zM53.200 41L1.700 143.800c-4.600 9.200.3 20.200 10.100 23l197.900 56.500c7.100 2 14.700-1 18.500-7.300L320 64 69.800 32.100c-6.900-.8-13.500 2.700-16.600 8.900z"/></svg> 1</span><span class="b bk"><svg class="i " viewBox="0 0 192 512" width="5.25" height="14" style=""><path d="M96 184c39.8 0 72 32.2 72 72s-32.2 72-72 72-72-32.2-72-72 32.2-72 72-72zM24 80c0 39.800 32.200 72 72 72s72-32.200 72-72S135.800 8 96 8 24 40.200 24 80zm0 352c0 39.800 32.200 72 72 72s72-32.200 72-72-32.200-72-72-72-72 32.200-72 72z"/></svg></span></td><td class="x">Cold cuts</td><td class="x"><span style="letter-spacing:-0.43px;">4 Packs</span></td><td class="x"><span style="letter-spacing:-0.3px;">2020-12-29</span> <span class="sm" style="letter-spacing:-0.15px">10 days from now</span></td></tr>
<tr class="warn"><td class="br"><span class="b bg"><svg class="i " viewBox="0 0 416 512" width="11.375" height="14" style=""><path d="M207.9 15.2c.8 4.7 16.1 94.5 16.1 128.8 0 52.300-27.800 89.600-68.900 104.600L168 486.700c.7 13.700-10.200 25.300-24 25.300H80c-13.700 0-24.700-11.500-24-25.300l12.900-238.100C27.700 233.600 0 196.200 0 144 0 109.600 15.300 19.900 16.100 15.200 19.300-5.100 61.400-5.400 64 16.300v141.200c1.300 3.400 15.100 3.200 16 0 1.400-25.300 7.900-139.200 8-141.800 3.300-20.800 44.700-20.800 47.900 0 .2 2.700 6.600 116.500 8 141.800.9 3.200 14.800 3.400 16 0V16.300c2.600-21.600 44.800-21.400 48-1.100zm119.200 285.700l-15 185.100c-1.200 14 9.900 26 23.900 26h56c13.300 0 24-10.700 24-24V24c0-13.200-10.700-24-24-24-82.500 0-221.400 178.500-64.900 300.900z"/></svg> 1</span><span class="b bd"><svg class="i " viewBox="0 0 416 512" width="11.375" height="14" style=""><path d="M207.9 15.2c.8 4.7 16.1 94.5 16.1 128.8 0 52.300-27.800 89.600-68.900 104.600L168 486.700c.7 13.700-10.200 25.300-24 25.300H80c-13.700 0-24.700-11.500-24-25.300l12.900-238.100C27.700 233.600 0 196.200 0 144 0 109.600 15.300 19.900 16.100 15.200 19.300-5.100 61.400-5.400 64 16.300v141.200c1.300 3.400 15.100 3.200 16 0 1.400-25.300 7.900-139.200 8-141.800 3.300-20.800 44.700-20.800 47.900 0 .2 2.700 6.600 116.500 8 141.800.9 3.200 14.800 3.400 16 0V16.300c2.600-21.600 44.800-21.400 48-1.100zm119.200 285.700l-15 185.100c-1.200 14 9.900 26 23.900 26h56c13.300 0 24-10.700 24-24V24c0-13.200-10.700-24-24-24-82.500 0-221.400 178.500-64.900 300.900z"/></svg> All</span><span class="b bo"><svg class="i " viewBox="0 0 640 512" width="17.5" height="14" style=""><path d="M425.7 256c-16.9 0-32.8-9-41.4-23.4L320 126l-64.200 106.600c-8.700 14.500-24.600 23.500-41.500 23.500-4.500 0-9-.6-13.300-1.900L64 215v178c0 14.700 10 27.500 24.200 31l216.200 54.100c10.200 2.500 20.900 2.500 31 0L551.800 424c14.200-3.600 24.200-16.400 24.200-31V215l-137 39.100c-4.300 1.300-8.800 1.900-13.300 1.900zm212.600-112.200L586.800 41c-3.100-6.200-9.800-9.800-16.700-8.900L320 64l91.700 152.100c3.800 6.300 11.400 9.300 18.500 7.300l197.900-56.500c9.900-2.900 14.700-13.900 10.200-23.100zM53.200 41L1.700 143.800c-4.600 9.200.3 20.200 10.100 23l197.900 56.500c7.100 2 14.700-1 18.500-7.300L320 64 69.800 32.100c-6.900-.8-13.500 2.700-16.600 8.900z"/></svg> 1</span><span class="b bk"><svg class="i " viewBox="0 0 192 512" width="5.25" height="14" style=""><path d="M96 184c39.8 0 72 32.2 72 72s-32.2 72-72 72-72-32.2-72-72 32.2-72 72-72zM24 80c0 39.800 32.200 72 72 72s72-32.200 72-72S135.800 8 96 8 24 40.200 24 80zm0 352c0 39.800 32.200 72 72 72s72-32.200 72-72-32.200-72-72-72-72 32.200-72 72z"/></svg></span></td><td class="x">Paprika</td><td class="x"><span style="letter-spacing:-0.39px;">5 Pieces</span></td><td class="x"><span style="letter-spacing:-0.3px;">2020-12-21</span> <span class="sm" style="letter-spacing:-0.16px">2 days from now</span></td></tr>
<tr class="sec"><td class="br"><span class="b bg"><svg class="i " viewBox="0 0 416 512" width="11.375" height="14" style=""><path d="M207.9 15.2c.8 4.7 16.1 94.5 16.1 128.8 0 52.300-27.800 89.600-68.900 104.600L168 486.700c.7 13.700-10.200 25.300-24 25.300H80c-13.700 0-24.700-11.500-24-25.300l12.900-238.100C27.700 233.600 0 196.200 0 144 0 109.600 15.300 19.900 16.100 15.200 19.300-5.100 61.400-5.400 64 16.300v141.200c1.300 3.400 15.100 3.200 16 0 1.400-25.300 7.900-139.200 8-141.800 3.300-20.800 44.700-20.800 47.900 0 .2 2.700 6.600 116.500 8 141.800.9 3.200 14.800 3.400 16 0V16.300c2.600-21.600 44.800-21.400 48-1.100zm119.200 285.700l-15 185.100c-1.200 14 9.900 26 23.900 26h56c13.300 0 24-10.700 24-24V24c0-13.200-10.700-24-24-24-82.500 0-221.400 178.500-64.900 300.900z"/></svg> 1</span><span class="b bd"><svg class="i " viewBox="0 0 416 512" width="11.375" height="14" style=""><path d="M207.9 15.2c.8 4.7 16.1 94.5 16.1 128.8 0 52.300-27.800 89.600-68.900 104.600L168 486.700c.7 13.700-10.200 25.300-24 25.300H80c-13.700 0-24.700-11.500-24-25.300l12.900-238.100C27.700 233.600 0 196.200 0 144 0 109.600 15.300 19.900 16.100 15.200 19.300-5.100 61.400-5.400 64 16.300v141.200c1.300 3.400 15.100 3.200 16 0 1.400-25.300 7.900-139.200 8-141.800 3.300-20.800 44.700-20.800 47.900 0 .2 2.700 6.600 116.500 8 141.800.9 3.200 14.800 3.400 16 0V16.300c2.600-21.600 44.800-21.400 48-1.100zm119.200 285.700l-15 185.100c-1.200 14 9.900 26 23.900 26h56c13.300 0 24-10.700 24-24V24c0-13.200-10.700-24-24-24-82.500 0-221.400 178.500-64.900 300.900z"/></svg> All</span><span class="b bo"><svg class="i " viewBox="0 0 640 512" width="17.5" height="14" style=""><path d="M425.7 256c-16.9 0-32.8-9-41.4-23.4L320 126l-64.200 106.600c-8.700 14.500-24.600 23.500-41.500 23.500-4.500 0-9-.6-13.300-1.900L64 215v178c0 14.700 10 27.500 24.200 31l216.200 54.100c10.200 2.500 20.900 2.500 31 0L551.800 424c14.200-3.600 24.200-16.400 24.200-31V215l-137 39.100c-4.300 1.300-8.800 1.900-13.300 1.900zm212.600-112.200L586.800 41c-3.100-6.200-9.800-9.800-16.700-8.900L320 64l91.700 152.100c3.800 6.300 11.400 9.300 18.500 7.300l197.900-56.500c9.900-2.900 14.700-13.900 10.200-23.100zM53.200 41L1.700 143.800c-4.600 9.200.3 20.200 10.100 23l197.900 56.500c7.100 2 14.700-1 18.500-7.300L320 64 69.800 32.100c-6.900-.8-13.500 2.700-16.600 8.900z"/></svg> 1</span><span class="b bk"><svg class="i " viewBox="0 0 192 512" width="5.25" height="14" style=""><path d="M96 184c39.8 0 72 32.2 72 72s-32.2 72-72 72-72-32.2-72-72 32.2-72 72-72zM24 80c0 39.800 32.200 72 72 72s72-32.200 72-72S135.800 8 96 8 24 40.200 24 80zm0 352c0 39.800 32.200 72 72 72s72-32.200 72-72-32.200-72-72-72-72 32.200-72 72z"/></svg></span></td><td class="x"><span style="letter-spacing:0.1px;">Cucumber</span></td><td class="x"><span style="letter-spacing:-0.39px;">5 Pieces</span></td><td class="x"><span style="letter-spacing:-0.3px;">2020-12-17</span> <span class="sm" style="letter-spacing:-0.26px">a day ago</span></td></tr>
<tr class="warn"><td class="br"><span class="b bg"><svg class="i " viewBox="0 0 416 512" width="11.375" height="14" style=""><path d="M207.9 15.2c.8 4.7 16.1 94.5 16.1 128.8 0 52.300-27.800 89.600-68.900 104.600L168 486.700c.7 13.700-10.200 25.300-24 25.300H80c-13.700 0-24.700-11.500-24-25.300l12.900-238.100C27.700 233.600 0 196.200 0 144 0 109.600 15.300 19.900 16.100 15.200 19.300-5.100 61.400-5.400 64 16.300v141.200c1.300 3.400 15.100 3.200 16 0 1.400-25.300 7.900-139.200 8-141.800 3.300-20.800 44.700-20.800 47.900 0 .2 2.700 6.600 116.500 8 141.800.9 3.200 14.800 3.400 16 0V16.300c2.600-21.600 44.800-21.400 48-1.100zm119.200 285.700l-15 185.100c-1.200 14 9.900 26 23.900 26h56c13.300 0 24-10.700 24-24V24c0-13.200-10.700-24-24-24-82.500 0-221.400 178.500-64.900 300.900z"/></svg> 1</span><span class="b bd"><svg class="i " viewBox="0 0 416 512" width="11.375" height="14" style=""><path d="M207.9 15.2c.8 4.7 16.1 94.5 16.1 128.8 0 52.300-27.800 89.600-68.900 104.600L168 486.700c.7 13.700-10.200 25.300-24 25.300H80c-13.700 0-24.700-11.500-24-25.300l12.900-238.100C27.700 233.600 0 196.200 0 144 0 109.600 15.300 19.900 16.100 15.200 19.300-5.100 61.400-5.400 64 16.300v141.200c1.300 3.400 15.100 3.200 16 0 1.400-25.300 7.900-139.200 8-141.800 3.300-20.800 44.700-20.800 47.900 0 .2 2.700 6.600 116.500 8 141.800.9 3.200 14.800 3.400 16 0V16.300c2.600-21.600 44.800-21.400 48-1.100zm119.200 285.700l-15 185.100c-1.200 14 9.900 26 23.900 26h56c13.300 0 24-10.700 24-24V24c0-13.200-10.700-24-24-24-82.500 0-221.400 178.500-64.900 300.900z"/></svg> All</span><span class="b bo"><svg class="i " viewBox="0 0 640 512" width="17.5" height="14" style=""><path d="M425.7 256c-16.9 0-32.8-9-41.4-23.4L320 126l-64.200 106.600c-8.700 14.500-24.600 23.500-41.500 23.500-4.500 0-9-.6-13.300-1.900L64 215v178c0 14.700 10 27.500 24.200 31l216.200 54.100c10.200 2.500 20.900 2.500 31 0L551.800 424c14.200-3.600 24.200-16.400 24.200-31V215l-137 39.100c-4.300 1.300-8.800 1.900-13.300 1.900zm212.600-112.200L586.800 41c-3.100-6.200-9.800-9.800-16.700-8.900L320 64l91.700 152.100c3.800 6.300 11.400 9.300 18.500 7.300l197.900-56.500c9.900-2.900 14.700-13.900 10.200-23.100zM53.200 41L1.700 143.800c-4.600 9.200.3 20.200 10.100 23l197.900 56.500c7.100 2 14.700-1 18.500-7.300L320 64 69.800 32.100c-6.900-.8-13.500 2.700-16.600 8.900z"/></svg> 1</span><span class="b bk"><svg class="i " viewBox="0 0 192 512" width="5.25" height="14" style=""><path d="M96 184c39.8 0 72 32.2 72 72s-32.2 72-72 72-72-32.2-72-72 32.2-72 72-72zM24 80c0 39.800 32.200 72 72 72s72-32.200 72-72S135.800 8 96 8 24 40.200 24 80zm0 352c0 39.800 32.200 72 72 72s72-32.200 72-72-32.200-72-72-72-72 32.200-72 72z"/></svg></span></td><td class="x"><span style="letter-spacing:-0.1px;">Radish</span></td><td class="x"><span style="letter-spacing:-0.1px;">5 Bunches</span></td><td class="x"><span style="letter-spacing:-0.3px;">2020-12-21</span> <span class="sm" style="letter-spacing:-0.16px">2 days from now</span></td></tr>
<tr class="sec"><td class="br"><span class="b bg"><svg class="i " viewBox="0 0 416 512" width="11.375" height="14" style=""><path d="M207.9 15.2c.8 4.7 16.1 94.5 16.1 128.8 0 52.300-27.800 89.600-68.900 104.600L168 486.700c.7 13.700-10.200 25.300-24 25.300H80c-13.700 0-24.700-11.500-24-25.300l12.900-238.100C27.700 233.600 0 196.200 0 144 0 109.600 15.300 19.900 16.100 15.200 19.300-5.100 61.400-5.400 64 16.300v141.200c1.300 3.400 15.100 3.200 16 0 1.400-25.300 7.900-139.200 8-141.800 3.300-20.800 44.700-20.800 47.900 0 .2 2.700 6.600 116.500 8 141.800.9 3.200 14.800 3.400 16 0V16.300c2.600-21.600 44.800-21.400 48-1.100zm119.200 285.700l-15 185.100c-1.200 14 9.900 26 23.900 26h56c13.300 0 24-10.700 24-24V24c0-13.200-10.700-24-24-24-82.500 0-221.400 178.500-64.900 300.900z"/></svg> 1</span><span class="b bd"><svg class="i " viewBox="0 0 416 512" width="11.375" height="14" style=""><path d="M207.9 15.2c.8 4.7 16.1 94.5 16.1 128.8 0 52.300-27.800 89.600-68.900 104.600L168 486.700c.7 13.700-10.200 25.300-24 25.300H80c-13.700 0-24.700-11.500-24-25.300l12.900-238.100C27.700 233.600 0 196.200 0 144 0 109.600 15.300 19.900 16.100 15.200 19.300-5.100 61.400-5.400 64 16.300v141.200c1.300 3.400 15.100 3.200 16 0 1.400-25.300 7.900-139.200 8-141.800 3.300-20.800 44.700-20.800 47.900 0 .2 2.700 6.600 116.500 8 141.800.9 3.200 14.800 3.400 16 0V16.300c2.600-21.600 44.800-21.400 48-1.100zm119.200 285.700l-15 185.100c-1.200 14 9.900 26 23.900 26h56c13.300 0 24-10.700 24-24V24c0-13.200-10.700-24-24-24-82.500 0-221.400 178.500-64.900 300.900z"/></svg> All</span><span class="b bo"><svg class="i " viewBox="0 0 640 512" width="17.5" height="14" style=""><path d="M425.7 256c-16.9 0-32.8-9-41.4-23.4L320 126l-64.200 106.600c-8.700 14.500-24.600 23.500-41.500 23.500-4.500 0-9-.6-13.300-1.900L64 215v178c0 14.700 10 27.500 24.200 31l216.200 54.100c10.200 2.500 20.900 2.500 31 0L551.800 424c14.200-3.600 24.200-16.400 24.200-31V215l-137 39.100c-4.300 1.300-8.800 1.900-13.300 1.900zm212.600-112.200L586.800 41c-3.100-6.200-9.800-9.800-16.700-8.900L320 64l91.700 152.100c3.800 6.300 11.400 9.300 18.500 7.300l197.900-56.500c9.900-2.900 14.700-13.900 10.200-23.100zM53.200 41L1.700 143.800c-4.600 9.200.3 20.200 10.100 23l197.900 56.500c7.100 2 14.700-1 18.500-7.300L320 64 69.800 32.100c-6.900-.8-13.500 2.700-16.600 8.900z"/></svg> 1</span><span class="b bk"><svg class="i " viewBox="0 0 192 512" width="5.25" height="14" style=""><path d="M96 184c39.8 0 72 32.2 72 72s-32.2 72-72 72-72-32.2-72-72 32.2-72 72-72zM24 80c0 39.800 32.200 72 72 72s72-32.200 72-72S135.800 8 96 8 24 40.200 24 80zm0 352c0 39.800 32.200 72 72 72s72-32.200 72-72-32.200-72-72-72-72 32.200-72 72z"/></svg></span></td><td class="x"><span style="letter-spacing:0.5px;">Tomato</span></td><td class="x"><span style="letter-spacing:-0.39px;">5 Pieces</span></td><td class="x"><span style="letter-spacing:-0.3px;">2020-12-17</span> <span class="sm" style="letter-spacing:-0.26px">a day ago</span></td></tr>
<tr class="info"><td class="br"><span class="b bg"><svg class="i " viewBox="0 0 416 512" width="11.375" height="14" style=""><path d="M207.9 15.2c.8 4.7 16.1 94.5 16.1 128.8 0 52.300-27.800 89.600-68.900 104.600L168 486.700c.7 13.700-10.200 25.300-24 25.300H80c-13.700 0-24.700-11.500-24-25.300l12.900-238.100C27.700 233.600 0 196.200 0 144 0 109.600 15.300 19.900 16.100 15.200 19.300-5.100 61.400-5.400 64 16.300v141.200c1.300 3.400 15.100 3.200 16 0 1.400-25.300 7.900-139.200 8-141.800 3.300-20.800 44.700-20.800 47.900 0 .2 2.700 6.600 116.500 8 141.800.9 3.200 14.800 3.400 16 0V16.300c2.600-21.600 44.800-21.400 48-1.100zm119.200 285.700l-15 185.100c-1.200 14 9.900 26 23.900 26h56c13.300 0 24-10.700 24-24V24c0-13.200-10.700-24-24-24-82.500 0-221.400 178.500-64.900 300.900z"/></svg> 1</span><span class="b bd"><svg class="i " viewBox="0 0 416 512" width="11.375" height="14" style=""><path d="M207.9 15.2c.8 4.7 16.1 94.5 16.1 128.8 0 52.300-27.800 89.600-68.900 104.600L168 486.700c.7 13.700-10.200 25.300-24 25.300H80c-13.700 0-24.700-11.500-24-25.300l12.900-238.100C27.700 233.600 0 196.200 0 144 0 109.600 15.300 19.900 16.100 15.200 19.300-5.100 61.400-5.400 64 16.300v141.200c1.300 3.400 15.100 3.200 16 0 1.400-25.300 7.900-139.200 8-141.800 3.300-20.800 44.700-20.800 47.900 0 .2 2.700 6.600 116.500 8 141.800.9 3.200 14.800 3.400 16 0V16.300c2.600-21.600 44.800-21.400 48-1.100zm119.200 285.700l-15 185.100c-1.200 14 9.900 26 23.900 26h56c13.300 0 24-10.700 24-24V24c0-13.200-10.700-24-24-24-82.500 0-221.400 178.500-64.900 300.900z"/></svg> All</span><span class="b bo"><svg class="i " viewBox="0 0 640 512" width="17.5" height="14" style=""><path d="M425.7 256c-16.9 0-32.8-9-41.4-23.4L320 126l-64.200 106.600c-8.700 14.500-24.600 23.500-41.500 23.500-4.500 0-9-.6-13.300-1.900L64 215v178c0 14.700 10 27.500 24.200 31l216.200 54.100c10.200 2.500 20.900 2.500 31 0L551.800 424c14.200-3.600 24.200-16.400 24.200-31V215l-137 39.100c-4.300 1.300-8.800 1.900-13.300 1.900zm212.600-112.200L586.800 41c-3.100-6.200-9.800-9.800-16.700-8.900L320 64l91.700 152.100c3.800 6.300 11.400 9.300 18.500 7.300l197.900-56.500c9.900-2.900 14.700-13.900 10.200-23.100zM53.200 41L1.700 143.800c-4.600 9.200.3 20.200 10.100 23l197.900 56.500c7.100 2 14.700-1 18.500-7.300L320 64 69.800 32.100c-6.900-.8-13.500 2.700-16.600 8.900z"/></svg> 1</span><span class="b bk"><svg class="i " viewBox="0 0 192 512" width="5.25" height="14" style=""><path d="M96 184c39.8 0 72 32.2 72 72s-32.2 72-72 72-72-32.2-72-72 32.2-72 72-72zM24 80c0 39.800 32.200 72 72 72s72-32.200 72-72S135.800 8 96 8 24 40.200 24 80zm0 352c0 39.800 32.200 72 72 72s72-32.200 72-72-32.200-72-72-72-72 32.200-72 72z"/></svg></span></td><td class="x"><span style="letter-spacing:0.06px;">Chocolate</span></td><td class="x"><span style="letter-spacing:-0.38px;">1 Pack</span> <span class="mut" style="margin-left:4.6px"><b class="sg">Σ</b> <span style="letter-spacing:-0.43px;">5 Packs</span></span> <svg class="i c" viewBox="0 0 576 512" width="15.75" height="14" style=""><path d="M528.12 301.319l47.273-208C578.806 78.301 567.391 64 551.99 64H159.208l-9.166-44.81C147.758 8.021 137.93 0 126.529 0H24C10.745 0 0 10.745 0 24v16c0 13.255 10.745 24 24 24h69.883l70.248 343.435C147.325 417.1 136 435.222 136 456c0 30.928 25.072 56 56 56s56-25.072 56-56c0-15.674-6.447-29.835-16.824-40h209.647C430.447 426.165 424 440.326 424 456c0 30.928 25.072 56 56 56s56-25.072 56-56c0-22.172-12.888-41.332-31.579-50.405l5.517-24.276c3.413-15.018-8.002-29.319-23.403-29.319H218.117l-6.545-32h293.145c11.206 0 20.92-7.754 23.403-18.681z"/></svg></td><td class="x"><span style="letter-spacing:-0.3px;">2021-06-17</span> <span class="sm" style="letter-spacing:-0.06px">6 months from now</span></td></tr>
<tr class="dang"><td class="br"><span class="b bg"><svg class="i " viewBox="0 0 416 512" width="11.375" height="14" style=""><path d="M207.9 15.2c.8 4.7 16.1 94.5 16.1 128.8 0 52.300-27.800 89.600-68.900 104.600L168 486.700c.7 13.700-10.200 25.300-24 25.300H80c-13.700 0-24.700-11.500-24-25.300l12.900-238.100C27.700 233.600 0 196.200 0 144 0 109.600 15.300 19.900 16.100 15.200 19.300-5.100 61.400-5.400 64 16.300v141.200c1.300 3.400 15.100 3.200 16 0 1.400-25.300 7.900-139.200 8-141.800 3.300-20.800 44.700-20.800 47.900 0 .2 2.700 6.600 116.500 8 141.800.9 3.200 14.800 3.400 16 0V16.300c2.600-21.600 44.800-21.400 48-1.100zm119.200 285.700l-15 185.100c-1.200 14 9.900 26 23.900 26h56c13.300 0 24-10.700 24-24V24c0-13.200-10.700-24-24-24-82.500 0-221.400 178.500-64.900 300.900z"/></svg> 1</span><span class="b bd"><svg class="i " viewBox="0 0 416 512" width="11.375" height="14" style=""><path d="M207.9 15.2c.8 4.7 16.1 94.5 16.1 128.8 0 52.300-27.800 89.600-68.900 104.600L168 486.700c.7 13.700-10.200 25.300-24 25.300H80c-13.700 0-24.700-11.500-24-25.300l12.900-238.100C27.700 233.600 0 196.200 0 144 0 109.600 15.300 19.900 16.100 15.200 19.300-5.100 61.400-5.400 64 16.300v141.200c1.300 3.400 15.100 3.200 16 0 1.400-25.300 7.900-139.200 8-141.800 3.300-20.800 44.700-20.800 47.900 0 .2 2.700 6.600 116.500 8 141.800.9 3.200 14.800 3.400 16 0V16.300c2.600-21.600 44.800-21.400 48-1.100zm119.200 285.700l-15 185.100c-1.200 14 9.900 26 23.900 26h56c13.300 0 24-10.700 24-24V24c0-13.200-10.700-24-24-24-82.500 0-221.400 178.500-64.900 300.900z"/></svg> All</span><span class="b bo"><svg class="i " viewBox="0 0 640 512" width="17.5" height="14" style=""><path d="M425.7 256c-16.9 0-32.8-9-41.4-23.4L320 126l-64.200 106.600c-8.700 14.500-24.600 23.500-41.500 23.500-4.500 0-9-.6-13.300-1.900L64 215v178c0 14.700 10 27.500 24.200 31l216.200 54.100c10.200 2.500 20.900 2.500 31 0L551.800 424c14.200-3.600 24.200-16.400 24.200-31V215l-137 39.100c-4.300 1.300-8.800 1.900-13.300 1.900zm212.600-112.200L586.800 41c-3.100-6.200-9.800-9.800-16.700-8.900L320 64l91.700 152.100c3.800 6.300 11.400 9.300 18.500 7.300l197.900-56.500c9.900-2.900 14.700-13.900 10.200-23.100zM53.200 41L1.700 143.800c-4.600 9.200.3 20.200 10.100 23l197.900 56.500c7.100 2 14.700-1 18.500-7.300L320 64 69.800 32.100c-6.900-.8-13.500 2.700-16.600 8.900z"/></svg> 1</span><span class="b bk"><svg class="i " viewBox="0 0 192 512" width="5.25" height="14" style=""><path d="M96 184c39.8 0 72 32.2 72 72s-32.2 72-72 72-72-32.2-72-72 32.2-72 72-72zM24 80c0 39.800 32.200 72 72 72s72-32.200 72-72S135.800 8 96 8 24 40.200 24 80zm0 352c0 39.800 32.200 72 72 72s72-32.200 72-72-32.200-72-72-72-72 32.200-72 72z"/></svg></span></td><td class="x"><span style="letter-spacing:0.37px;">Minced meat</span></td><td class="x"><span style="letter-spacing:-0.38px;">1 Pack</span> <svg class="i c" viewBox="0 0 576 512" width="15.75" height="14" style=""><path d="M528.12 301.319l47.273-208C578.806 78.301 567.391 64 551.99 64H159.208l-9.166-44.81C147.758 8.021 137.93 0 126.529 0H24C10.745 0 0 10.745 0 24v16c0 13.255 10.745 24 24 24h69.883l70.248 343.435C147.325 417.1 136 435.222 136 456c0 30.928 25.072 56 56 56s56-25.072 56-56c0-15.674-6.447-29.835-16.824-40h209.647C430.447 426.165 424 440.326 424 456c0 30.928 25.072 56 56 56s56-25.072 56-56c0-22.172-12.888-41.332-31.579-50.405l5.517-24.276c3.413-15.018-8.002-29.319-23.403-29.319H218.117l-6.545-32h293.145c11.206 0 20.92-7.754 23.403-18.681z"/></svg></td><td class="x"><span style="letter-spacing:-0.3px;">2020-12-18</span> <span class="sm" style="letter-spacing:-0.03px">about 17 hours ago</span></td></tr>
<tr class=""><td class="br"><span class="b bg dis"><svg class="i " viewBox="0 0 416 512" width="11.375" height="14" style=""><path d="M207.9 15.2c.8 4.7 16.1 94.5 16.1 128.8 0 52.300-27.800 89.600-68.900 104.600L168 486.700c.7 13.700-10.200 25.300-24 25.300H80c-13.700 0-24.700-11.500-24-25.300l12.900-238.100C27.700 233.600 0 196.200 0 144 0 109.600 15.300 19.900 16.100 15.200 19.300-5.100 61.400-5.400 64 16.300v141.200c1.300 3.400 15.100 3.200 16 0 1.400-25.300 7.900-139.200 8-141.800 3.300-20.800 44.700-20.800 47.900 0 .2 2.700 6.600 116.500 8 141.800.9 3.200 14.800 3.400 16 0V16.300c2.600-21.600 44.800-21.400 48-1.100zm119.200 285.700l-15 185.100c-1.200 14 9.900 26 23.900 26h56c13.300 0 24-10.700 24-24V24c0-13.200-10.700-24-24-24-82.500 0-221.400 178.500-64.900 300.900z"/></svg> 1</span><span class="b bd"><svg class="i " viewBox="0 0 416 512" width="11.375" height="14" style=""><path d="M207.9 15.2c.8 4.7 16.1 94.5 16.1 128.8 0 52.300-27.800 89.600-68.900 104.600L168 486.700c.7 13.700-10.200 25.300-24 25.300H80c-13.700 0-24.700-11.500-24-25.300l12.900-238.100C27.700 233.600 0 196.200 0 144 0 109.600 15.300 19.900 16.100 15.200 19.300-5.100 61.400-5.400 64 16.300v141.200c1.300 3.400 15.100 3.200 16 0 1.400-25.300 7.900-139.200 8-141.800 3.300-20.800 44.700-20.800 47.900 0 .2 2.700 6.600 116.500 8 141.800.9 3.200 14.800 3.400 16 0V16.300c2.600-21.600 44.800-21.400 48-1.100zm119.200 285.700l-15 185.100c-1.200 14 9.900 26 23.900 26h56c13.300 0 24-10.700 24-24V24c0-13.200-10.700-24-24-24-82.500 0-221.400 178.500-64.900 300.900z"/></svg> All</span><span class="b bo dis"><svg class="i " viewBox="0 0 640 512" width="17.5" height="14" style=""><path d="M425.7 256c-16.9 0-32.8-9-41.4-23.4L320 126l-64.200 106.600c-8.700 14.500-24.600 23.500-41.500 23.500-4.500 0-9-.6-13.300-1.900L64 215v178c0 14.700 10 27.500 24.200 31l216.200 54.100c10.200 2.500 20.900 2.500 31 0L551.800 424c14.200-3.600 24.200-16.400 24.200-31V215l-137 39.100c-4.300 1.300-8.800 1.900-13.300 1.900zm212.600-112.200L586.800 41c-3.100-6.200-9.800-9.800-16.700-8.900L320 64l91.700 152.100c3.800 6.300 11.400 9.300 18.500 7.300l197.900-56.500c9.900-2.900 14.700-13.900 10.200-23.100zM53.200 41L1.700 143.800c-4.600 9.200.3 20.200 10.100 23l197.900 56.500c7.100 2 14.700-1 18.500-7.300L320 64 69.800 32.100c-6.900-.8-13.500 2.700-16.600 8.900z"/></svg> 1</span><span class="b bk"><svg class="i " viewBox="0 0 192 512" width="5.25" height="14" style=""><path d="M96 184c39.8 0 72 32.2 72 72s-32.2 72-72 72-72-32.2-72-72 32.2-72 72-72zM24 80c0 39.800 32.200 72 72 72s72-32.200 72-72S135.800 8 96 8 24 40.200 24 80zm0 352c0 39.800 32.200 72 72 72s72-32.200 72-72-32.200-72-72-72-72 32.200-72 72z"/></svg></span></td><td class="x"><span style="letter-spacing:0.2px;">Flour</span></td><td class="x"><span style="letter-spacing:-0.2px;">2,000 Grams</span></td><td class="x"><span style="letter-spacing:-0.3px;">2021-07-07</span> <span class="sm" style="letter-spacing:-0.06px">7 months from now</span></td></tr>
<tr class=""><td class="br"><span class="b bg"><svg class="i " viewBox="0 0 416 512" width="11.375" height="14" style=""><path d="M207.9 15.2c.8 4.7 16.1 94.5 16.1 128.8 0 52.300-27.800 89.600-68.900 104.600L168 486.700c.7 13.700-10.200 25.300-24 25.300H80c-13.700 0-24.700-11.500-24-25.300l12.900-238.100C27.700 233.600 0 196.200 0 144 0 109.600 15.300 19.900 16.100 15.200 19.300-5.100 61.400-5.400 64 16.300v141.200c1.300 3.400 15.100 3.200 16 0 1.400-25.300 7.900-139.200 8-141.800 3.300-20.800 44.700-20.800 47.900 0 .2 2.700 6.600 116.500 8 141.800.9 3.200 14.800 3.400 16 0V16.300c2.600-21.600 44.800-21.400 48-1.100zm119.200 285.700l-15 185.100c-1.200 14 9.900 26 23.900 26h56c13.300 0 24-10.700 24-24V24c0-13.200-10.700-24-24-24-82.500 0-221.400 178.500-64.900 300.900z"/></svg> 1</span><span class="b bd"><svg class="i " viewBox="0 0 416 512" width="11.375" height="14" style=""><path d="M207.9 15.2c.8 4.7 16.1 94.5 16.1 128.8 0 52.300-27.800 89.600-68.900 104.600L168 486.700c.7 13.700-10.200 25.300-24 25.300H80c-13.700 0-24.700-11.500-24-25.300l12.900-238.100C27.700 233.600 0 196.200 0 144 0 109.600 15.300 19.900 16.100 15.200 19.300-5.100 61.400-5.400 64 16.300v141.200c1.300 3.400 15.100 3.200 16 0 1.400-25.300 7.900-139.200 8-141.800 3.300-20.800 44.700-20.800 47.900 0 .2 2.700 6.600 116.500 8 141.800.9 3.200 14.800 3.400 16 0V16.300c2.600-21.600 44.800-21.400 48-1.100zm119.200 285.700l-15 185.100c-1.200 14 9.900 26 23.900 26h56c13.300 0 24-10.700 24-24V24c0-13.200-10.700-24-24-24-82.500 0-221.400 178.500-64.900 300.900z"/></svg> All</span><span class="b bo"><svg class="i " viewBox="0 0 640 512" width="17.5" height="14" style=""><path d="M425.7 256c-16.9 0-32.8-9-41.4-23.4L320 126l-64.200 106.600c-8.700 14.500-24.600 23.500-41.500 23.500-4.500 0-9-.6-13.300-1.900L64 215v178c0 14.700 10 27.500 24.200 31l216.200 54.100c10.200 2.500 20.900 2.500 31 0L551.800 424c14.200-3.600 24.200-16.400 24.200-31V215l-137 39.100c-4.300 1.300-8.800 1.900-13.300 1.900zm212.600-112.200L586.800 41c-3.100-6.200-9.800-9.800-16.700-8.900L320 64l91.700 152.100c3.800 6.300 11.400 9.300 18.500 7.300l197.900-56.500c9.900-2.900 14.700-13.900 10.200-23.100zM53.200 41L1.700 143.800c-4.600 9.200.3 20.200 10.100 23l197.900 56.500c7.100 2 14.700-1 18.500-7.300L320 64 69.800 32.100c-6.900-.8-13.500 2.700-16.600 8.900z"/></svg> 1</span><span class="b bk"><svg class="i " viewBox="0 0 192 512" width="5.25" height="14" style=""><path d="M96 184c39.8 0 72 32.2 72 72s-32.2 72-72 72-72-32.2-72-72 32.2-72 72-72zM24 80c0 39.800 32.200 72 72 72s72-32.200 72-72S135.800 8 96 8 24 40.200 24 80zm0 352c0 39.800 32.200 72 72 72s72-32.200 72-72-32.200-72-72-72-72 32.200-72 72z"/></svg></span></td><td class="x"><span style="letter-spacing:0.1px;">Sugar</span></td><td class="x"><span style="letter-spacing:-0.43px;">2 Packs</span> <span class="sm" style="letter-spacing:-.2px">1 opened</span></td><td class="x"><span style="letter-spacing:-0.3px;">2021-07-07</span> <span class="sm" style="letter-spacing:-0.06px">7 months from now</span></td></tr>
<tr class="warn"><td class="br"><span class="b bg"><svg class="i " viewBox="0 0 416 512" width="11.375" height="14" style=""><path d="M207.9 15.2c.8 4.7 16.1 94.5 16.1 128.8 0 52.300-27.800 89.600-68.900 104.600L168 486.700c.7 13.700-10.200 25.300-24 25.300H80c-13.700 0-24.700-11.500-24-25.300l12.900-238.100C27.700 233.600 0 196.200 0 144 0 109.600 15.300 19.900 16.100 15.200 19.300-5.100 61.400-5.400 64 16.300v141.200c1.300 3.400 15.100 3.200 16 0 1.400-25.300 7.900-139.200 8-141.800 3.300-20.800 44.700-20.800 47.900 0 .2 2.700 6.600 116.500 8 141.800.9 3.200 14.800 3.400 16 0V16.300c2.600-21.600 44.800-21.400 48-1.100zm119.200 285.700l-15 185.100c-1.200 14 9.900 26 23.900 26h56c13.300 0 24-10.700 24-24V24c0-13.200-10.700-24-24-24-82.500 0-221.400 178.500-64.900 300.900z"/></svg> 1</span><span class="b bd"><svg class="i " viewBox="0 0 416 512" width="11.375" height="14" style=""><path d="M207.9 15.2c.8 4.7 16.1 94.5 16.1 128.8 0 52.300-27.800 89.600-68.900 104.600L168 486.700c.7 13.700-10.200 25.300-24 25.300H80c-13.700 0-24.700-11.500-24-25.300l12.900-238.100C27.700 233.600 0 196.200 0 144 0 109.600 15.300 19.900 16.100 15.200 19.300-5.100 61.400-5.400 64 16.300v141.200c1.300 3.400 15.100 3.200 16 0 1.400-25.300 7.900-139.200 8-141.800 3.300-20.800 44.700-20.800 47.900 0 .2 2.700 6.600 116.500 8 141.800.9 3.200 14.800 3.400 16 0V16.300c2.600-21.600 44.800-21.400 48-1.100zm119.200 285.700l-15 185.100c-1.200 14 9.900 26 23.900 26h56c13.300 0 24-10.700 24-24V24c0-13.200-10.700-24-24-24-82.500 0-221.400 178.500-64.900 300.900z"/></svg> All</span><span class="b bo"><svg class="i " viewBox="0 0 640 512" width="17.5" height="14" style=""><path d="M425.7 256c-16.9 0-32.8-9-41.4-23.4L320 126l-64.200 106.600c-8.700 14.500-24.600 23.500-41.500 23.500-4.500 0-9-.6-13.300-1.900L64 215v178c0 14.700 10 27.500 24.200 31l216.200 54.100c10.200 2.500 20.900 2.500 31 0L551.800 424c14.200-3.600 24.200-16.400 24.200-31V215l-137 39.100c-4.300 1.300-8.800 1.900-13.300 1.900zm212.600-112.200L586.800 41c-3.100-6.200-9.800-9.800-16.700-8.900L320 64l91.700 152.100c3.800 6.300 11.400 9.300 18.500 7.300l197.900-56.500c9.900-2.900 14.700-13.900 10.200-23.100zM53.200 41L1.700 143.800c-4.600 9.200.3 20.200 10.100 23l197.900 56.500c7.100 2 14.700-1 18.500-7.300L320 64 69.800 32.100c-6.900-.8-13.500 2.700-16.600 8.900z"/></svg> 1</span><span class="b bk"><svg class="i " viewBox="0 0 192 512" width="5.25" height="14" style=""><path d="M96 184c39.8 0 72 32.2 72 72s-32.2 72-72 72-72-32.2-72-72 32.2-72 72-72zM24 80c0 39.800 32.200 72 72 72s72-32.200 72-72S135.800 8 96 8 24 40.200 24 80zm0 352c0 39.800 32.200 72 72 72s72-32.200 72-72-32.200-72-72-72-72 32.200-72 72z"/></svg></span></td><td class="x"><span style="letter-spacing:0.6px;">Milk</span></td><td class="x"><span style="letter-spacing:0.1px;">2 Bottles</span></td><td class="x"><span style="letter-spacing:-0.3px;">2020-12-21</span> <span class="sm" style="letter-spacing:-0.16px">2 days from now</span></td></tr>
<tr class=""><td class="br"><span class="b bg"><svg class="i " viewBox="0 0 416 512" width="11.375" height="14" style=""><path d="M207.9 15.2c.8 4.7 16.1 94.5 16.1 128.8 0 52.300-27.800 89.600-68.900 104.600L168 486.700c.7 13.700-10.200 25.300-24 25.300H80c-13.700 0-24.700-11.500-24-25.300l12.900-238.100C27.700 233.600 0 196.200 0 144 0 109.600 15.300 19.900 16.100 15.200 19.300-5.100 61.400-5.400 64 16.300v141.200c1.300 3.400 15.100 3.200 16 0 1.400-25.300 7.900-139.200 8-141.800 3.300-20.800 44.700-20.800 47.900 0 .2 2.700 6.600 116.500 8 141.800.9 3.200 14.800 3.400 16 0V16.300c2.600-21.600 44.800-21.400 48-1.100zm119.200 285.700l-15 185.100c-1.200 14 9.900 26 23.900 26h56c13.300 0 24-10.700 24-24V24c0-13.200-10.700-24-24-24-82.500 0-221.400 178.500-64.900 300.900z"/></svg> 1</span><span class="b bd"><svg class="i " viewBox="0 0 416 512" width="11.375" height="14" style=""><path d="M207.9 15.2c.8 4.7 16.1 94.5 16.1 128.8 0 52.300-27.800 89.600-68.900 104.600L168 486.700c.7 13.700-10.200 25.300-24 25.300H80c-13.700 0-24.700-11.500-24-25.300l12.900-238.100C27.700 233.600 0 196.200 0 144 0 109.600 15.300 19.900 16.100 15.200 19.300-5.100 61.400-5.400 64 16.300v141.200c1.300 3.400 15.100 3.200 16 0 1.400-25.300 7.900-139.200 8-141.800 3.300-20.800 44.700-20.800 47.900 0 .2 2.700 6.600 116.500 8 141.800.9 3.200 14.800 3.400 16 0V16.300c2.600-21.600 44.800-21.400 48-1.100zm119.200 285.700l-15 185.100c-1.200 14 9.900 26 23.900 26h56c13.300 0 24-10.700 24-24V24c0-13.200-10.700-24-24-24-82.500 0-221.400 178.500-64.900 300.900z"/></svg> All</span><span class="b bo"><svg class="i " viewBox="0 0 640 512" width="17.5" height="14" style=""><path d="M425.7 256c-16.9 0-32.8-9-41.4-23.4L320 126l-64.200 106.600c-8.700 14.500-24.600 23.500-41.500 23.500-4.500 0-9-.6-13.300-1.900L64 215v178c0 14.700 10 27.500 24.200 31l216.200 54.100c10.200 2.500 20.900 2.500 31 0L551.800 424c14.200-3.600 24.200-16.400 24.200-31V215l-137 39.100c-4.300 1.300-8.800 1.900-13.300 1.900zm212.600-112.200L586.800 41c-3.100-6.200-9.800-9.800-16.700-8.900L320 64l91.700 152.100c3.800 6.300 11.400 9.300 18.500 7.300l197.900-56.500c9.900-2.900 14.700-13.900 10.200-23.100zM53.200 41L1.700 143.800c-4.600 9.200.3 20.200 10.100 23l197.900 56.500c7.100 2 14.700-1 18.500-7.300L320 64 69.800 32.100c-6.900-.8-13.500 2.700-16.600 8.900z"/></svg> 1</span><span class="b bk"><svg class="i " viewBox="0 0 192 512" width="5.25" height="14" style=""><path d="M96 184c39.8 0 72 32.2 72 72s-32.2 72-72 72-72-32.2-72-72 32.2-72 72-72zM24 80c0 39.800 32.200 72 72 72s72-32.200 72-72S135.800 8 96 8 24 40.200 24 80zm0 352c0 39.800 32.200 72 72 72s72-32.200 72-72-32.200-72-72-72-72 32.200-72 72z"/></svg></span></td><td class="x"><span style="letter-spacing:0.23px;">Milk Chocolate</span></td><td class="x"><span style="letter-spacing:-0.43px;">2 Packs</span></td><td class="x"><span style="letter-spacing:-0.3px;">2021-06-17</span> <span class="sm" style="letter-spacing:-0.06px">6 months from now</span></td></tr>
<tr class=""><td class="br"><span class="b bg"><svg class="i " viewBox="0 0 416 512" width="11.375" height="14" style=""><path d="M207.9 15.2c.8 4.7 16.1 94.5 16.1 128.8 0 52.300-27.800 89.600-68.900 104.600L168 486.700c.7 13.700-10.200 25.300-24 25.300H80c-13.700 0-24.700-11.500-24-25.300l12.900-238.100C27.700 233.600 0 196.200 0 144 0 109.600 15.300 19.900 16.100 15.200 19.300-5.100 61.400-5.400 64 16.300v141.200c1.300 3.400 15.100 3.200 16 0 1.400-25.300 7.900-139.200 8-141.800 3.300-20.800 44.700-20.800 47.900 0 .2 2.700 6.600 116.500 8 141.800.9 3.200 14.800 3.400 16 0V16.300c2.600-21.600 44.800-21.400 48-1.100zm119.200 285.700l-15 185.100c-1.200 14 9.900 26 23.900 26h56c13.300 0 24-10.700 24-24V24c0-13.200-10.700-24-24-24-82.500 0-221.400 178.500-64.900 300.900z"/></svg> 1</span><span class="b bd"><svg class="i " viewBox="0 0 416 512" width="11.375" height="14" style=""><path d="M207.9 15.2c.8 4.7 16.1 94.5 16.1 128.8 0 52.300-27.800 89.600-68.900 104.600L168 486.700c.7 13.700-10.200 25.300-24 25.300H80c-13.700 0-24.700-11.500-24-25.300l12.900-238.100C27.700 233.600 0 196.200 0 144 0 109.600 15.300 19.900 16.100 15.200 19.300-5.100 61.400-5.400 64 16.300v141.200c1.300 3.400 15.100 3.200 16 0 1.400-25.300 7.900-139.200 8-141.800 3.300-20.800 44.700-20.800 47.900 0 .2 2.700 6.600 116.500 8 141.800.9 3.200 14.800 3.400 16 0V16.300c2.600-21.600 44.800-21.400 48-1.100zm119.200 285.700l-15 185.100c-1.200 14 9.900 26 23.900 26h56c13.300 0 24-10.700 24-24V24c0-13.200-10.700-24-24-24-82.500 0-221.400 178.500-64.900 300.900z"/></svg> All</span><span class="b bo"><svg class="i " viewBox="0 0 640 512" width="17.5" height="14" style=""><path d="M425.7 256c-16.9 0-32.8-9-41.4-23.4L320 126l-64.200 106.600c-8.700 14.500-24.600 23.500-41.500 23.500-4.500 0-9-.6-13.300-1.900L64 215v178c0 14.700 10 27.500 24.200 31l216.200 54.100c10.200 2.500 20.900 2.500 31 0L551.800 424c14.200-3.600 24.200-16.400 24.200-31V215l-137 39.100c-4.300 1.300-8.800 1.900-13.300 1.900zm212.600-112.200L586.800 41c-3.100-6.200-9.800-9.800-16.700-8.900L320 64l91.700 152.100c3.800 6.300 11.400 9.300 18.500 7.300l197.900-56.500c9.900-2.900 14.700-13.900 10.200-23.100zM53.200 41L1.700 143.800c-4.600 9.200.3 20.200 10.100 23l197.900 56.500c7.100 2 14.700-1 18.500-7.300L320 64 69.800 32.100c-6.900-.8-13.500 2.700-16.600 8.900z"/></svg> 1</span><span class="b bk"><svg class="i " viewBox="0 0 192 512" width="5.25" height="14" style=""><path d="M96 184c39.8 0 72 32.2 72 72s-32.2 72-72 72-72-32.2-72-72 32.2-72 72-72zM24 80c0 39.800 32.200 72 72 72s72-32.200 72-72S135.800 8 96 8 24 40.200 24 80zm0 352c0 39.800 32.200 72 72 72s72-32.200 72-72-32.200-72-72-72-72 32.200-72 72z"/></svg></span></td><td class="x"><span style="letter-spacing:0.115px;">Dark Chocolate</span></td><td class="x"><span style="letter-spacing:-0.43px;">2 Packs</span></td><td class="x"><span style="letter-spacing:-0.3px;">2021-06-17</span> <span class="sm" style="letter-spacing:-0.06px">6 months from now</span></td></tr>
<tr class="info"><td class="br"><span class="b bg"><svg class="i " viewBox="0 0 416 512" width="11.375" height="14" style=""><path d="M207.9 15.2c.8 4.7 16.1 94.5 16.1 128.8 0 52.300-27.800 89.600-68.900 104.600L168 486.700c.7 13.700-10.200 25.300-24 25.300H80c-13.700 0-24.700-11.500-24-25.300l12.900-238.100C27.700 233.600 0 196.200 0 144 0 109.600 15.300 19.900 16.100 15.200 19.300-5.100 61.400-5.400 64 16.300v141.200c1.300 3.400 15.100 3.200 16 0 1.400-25.300 7.900-139.200 8-141.800 3.300-20.800 44.700-20.800 47.900 0 .2 2.700 6.600 116.500 8 141.800.9 3.200 14.800 3.400 16 0V16.300c2.600-21.600 44.800-21.400 48-1.100zm119.200 285.700l-15 185.100c-1.200 14 9.900 26 23.900 26h56c13.300 0 24-10.700 24-24V24c0-13.200-10.700-24-24-24-82.500 0-221.400 178.500-64.900 300.900z"/></svg> 1</span><span class="b bd"><svg class="i " viewBox="0 0 416 512" width="11.375" height="14" style=""><path d="M207.9 15.2c.8 4.7 16.1 94.5 16.1 128.8 0 52.300-27.800 89.600-68.900 104.600L168 486.700c.7 13.700-10.200 25.300-24 25.300H80c-13.700 0-24.700-11.500-24-25.300l12.900-238.100C27.700 233.600 0 196.200 0 144 0 109.600 15.300 19.900 16.100 15.200 19.300-5.100 61.400-5.400 64 16.300v141.200c1.300 3.400 15.100 3.200 16 0 1.400-25.300 7.900-139.200 8-141.800 3.300-20.800 44.700-20.800 47.900 0 .2 2.700 6.600 116.500 8 141.800.9 3.200 14.800 3.400 16 0V16.300c2.600-21.600 44.800-21.400 48-1.100zm119.200 285.700l-15 185.100c-1.200 14 9.900 26 23.900 26h56c13.300 0 24-10.700 24-24V24c0-13.200-10.700-24-24-24-82.500 0-221.400 178.500-64.900 300.900z"/></svg> All</span><span class="b bo"><svg class="i " viewBox="0 0 640 512" width="17.5" height="14" style=""><path d="M425.7 256c-16.9 0-32.8-9-41.4-23.4L320 126l-64.200 106.600c-8.700 14.500-24.600 23.500-41.500 23.500-4.500 0-9-.6-13.300-1.900L64 215v178c0 14.700 10 27.500 24.200 31l216.200 54.100c10.200 2.500 20.900 2.500 31 0L551.800 424c14.200-3.600 24.200-16.400 24.200-31V215l-137 39.100c-4.300 1.300-8.800 1.900-13.300 1.900zm212.600-112.200L586.800 41c-3.100-6.200-9.800-9.800-16.700-8.900L320 64l91.700 152.100c3.800 6.300 11.400 9.300 18.500 7.300l197.900-56.500c9.900-2.900 14.700-13.900 10.200-23.100zM53.200 41L1.700 143.800c-4.600 9.200.3 20.200 10.100 23l197.900 56.500c7.100 2 14.700-1 18.500-7.300L320 64 69.800 32.100c-6.900-.8-13.500 2.700-16.600 8.900z"/></svg> 1</span><span class="b bk"><svg class="i " viewBox="0 0 192 512" width="5.25" height="14" style=""><path d="M96 184c39.8 0 72 32.2 72 72s-32.2 72-72 72-72-32.2-72-72 32.2-72 72-72zM24 80c0 39.800 32.200 72 72 72s72-32.200 72-72S135.800 8 96 8 24 40.200 24 80zm0 352c0 39.800 32.200 72 72 72s72-32.200 72-72-32.200-72-72-72-72 32.200-72 72z"/></svg></span></td><td class="x"><span style="letter-spacing:0.19px;">Gummy bears</span></td><td class="x"><span style="letter-spacing:-0.43px;">5 Packs</span> <span class="sm" style="letter-spacing:-.2px">1 opened</span> <svg class="i c" viewBox="0 0 576 512" width="15.75" height="14" style=""><path d="M528.12 301.319l47.273-208C578.806 78.301 567.391 64 551.99 64H159.208l-9.166-44.81C147.758 8.021 137.93 0 126.529 0H24C10.745 0 0 10.745 0 24v16c0 13.255 10.745 24 24 24h69.883l70.248 343.435C147.325 417.1 136 435.222 136 456c0 30.928 25.072 56 56 56s56-25.072 56-56c0-15.674-6.447-29.835-16.824-40h209.647C430.447 426.165 424 440.326 424 456c0 30.928 25.072 56 56 56s56-25.072 56-56c0-22.172-12.888-41.332-31.579-50.405l5.517-24.276c3.413-15.018-8.002-29.319-23.403-29.319H218.117l-6.545-32h293.145c11.206 0 20.92-7.754 23.403-18.681z"/></svg></td><td class="x"><span style="letter-spacing:-0.3px;">2021-06-17</span> <span class="sm" style="letter-spacing:-0.06px">6 months from now</span></td></tr>
<tr class="info"><td class="br"><span class="b bg"><svg class="i " viewBox="0 0 416 512" width="11.375" height="14" style=""><path d="M207.9 15.2c.8 4.7 16.1 94.5 16.1 128.8 0 52.300-27.800 89.600-68.900 104.600L168 486.700c.7 13.700-10.200 25.300-24 25.300H80c-13.700 0-24.700-11.500-24-25.300l12.900-238.100C27.700 233.600 0 196.200 0 144 0 109.600 15.300 19.900 16.100 15.200 19.300-5.100 61.400-5.400 64 16.300v141.200c1.300 3.400 15.100 3.200 16 0 1.400-25.300 7.900-139.200 8-141.800 3.300-20.800 44.700-20.800 47.900 0 .2 2.700 6.600 116.500 8 141.800.9 3.200 14.800 3.400 16 0V16.300c2.600-21.600 44.800-21.400 48-1.100zm119.200 285.700l-15 185.100c-1.200 14 9.900 26 23.900 26h56c13.300 0 24-10.700 24-24V24c0-13.200-10.700-24-24-24-82.500 0-221.400 178.500-64.900 300.900z"/></svg> 1</span><span class="b bd"><svg class="i " viewBox="0 0 416 512" width="11.375" height="14" style=""><path d="M207.9 15.2c.8 4.7 16.1 94.5 16.1 128.8 0 52.300-27.800 89.600-68.900 104.600L168 486.700c.7 13.700-10.200 25.300-24 25.300H80c-13.700 0-24.700-11.500-24-25.300l12.900-238.100C27.700 233.600 0 196.200 0 144 0 109.600 15.300 19.900 16.100 15.200 19.300-5.100 61.400-5.400 64 16.300v141.200c1.300 3.400 15.100 3.200 16 0 1.400-25.300 7.900-139.200 8-141.800 3.300-20.800 44.700-20.800 47.900 0 .2 2.700 6.600 116.500 8 141.800.9 3.200 14.800 3.400 16 0V16.300c2.600-21.600 44.800-21.400 48-1.100zm119.200 285.700l-15 185.100c-1.200 14 9.900 26 23.900 26h56c13.300 0 24-10.700 24-24V24c0-13.200-10.700-24-24-24-82.500 0-221.400 178.500-64.900 300.900z"/></svg> All</span><span class="b bo"><svg class="i " viewBox="0 0 640 512" width="17.5" height="14" style=""><path d="M425.7 256c-16.9 0-32.8-9-41.4-23.4L320 126l-64.200 106.600c-8.700 14.500-24.600 23.500-41.500 23.500-4.500 0-9-.6-13.300-1.900L64 215v178c0 14.700 10 27.500 24.200 31l216.200 54.100c10.200 2.500 20.900 2.500 31 0L551.800 424c14.200-3.600 24.200-16.400 24.200-31V215l-137 39.100c-4.300 1.300-8.800 1.900-13.300 1.900zm212.600-112.200L586.800 41c-3.100-6.200-9.800-9.800-16.700-8.900L320 64l91.700 152.100c3.800 6.300 11.400 9.300 18.500 7.300l197.900-56.500c9.900-2.900 14.700-13.900 10.200-23.100zM53.200 41L1.700 143.800c-4.600 9.200.3 20.200 10.100 23l197.900 56.500c7.100 2 14.700-1 18.500-7.300L320 64 69.800 32.100c-6.900-.8-13.500 2.700-16.600 8.900z"/></svg> 1</span><span class="b bk"><svg class="i " viewBox="0 0 192 512" width="5.25" height="14" style=""><path d="M96 184c39.8 0 72 32.2 72 72s-32.2 72-72 72-72-32.2-72-72 32.2-72 72-72zM24 80c0 39.800 32.200 72 72 72s72-32.200 72-72S135.800 8 96 8 24 40.200 24 80zm0 352c0 39.800 32.200 72 72 72s72-32.200 72-72-32.200-72-72-72-72 32.200-72 72z"/></svg></span></td><td class="x">Crisps</td><td class="x"><span style="letter-spacing:-0.43px;">5 Packs</span> <svg class="i c" viewBox="0 0 576 512" width="15.75" height="14" style=""><path d="M528.12 301.319l47.273-208C578.806 78.301 567.391 64 551.99 64H159.208l-9.166-44.81C147.758 8.021 137.93 0 126.529 0H24C10.745 0 0 10.745 0 24v16c0 13.255 10.745 24 24 24h69.883l70.248 343.435C147.325 417.1 136 435.222 136 456c0 30.928 25.072 56 56 56s56-25.072 56-56c0-15.674-6.447-29.835-16.824-40h209.647C430.447 426.165 424 440.326 424 456c0 30.928 25.072 56 56 56s56-25.072 56-56c0-22.172-12.888-41.332-31.579-50.405l5.517-24.276c3.413-15.018-8.002-29.319-23.403-29.319H218.117l-6.545-32h293.145c11.206 0 20.92-7.754 23.403-18.681z"/></svg></td><td class="x"><span style="letter-spacing:-0.3px;">2021-06-17</span> <span class="sm" style="letter-spacing:-0.06px">6 months from now</span></td></tr>
<tr><td class="br" style="height:42px"></td><td></td><td></td><td></td></tr>
</tbody></table>
</div>
</body></html>
